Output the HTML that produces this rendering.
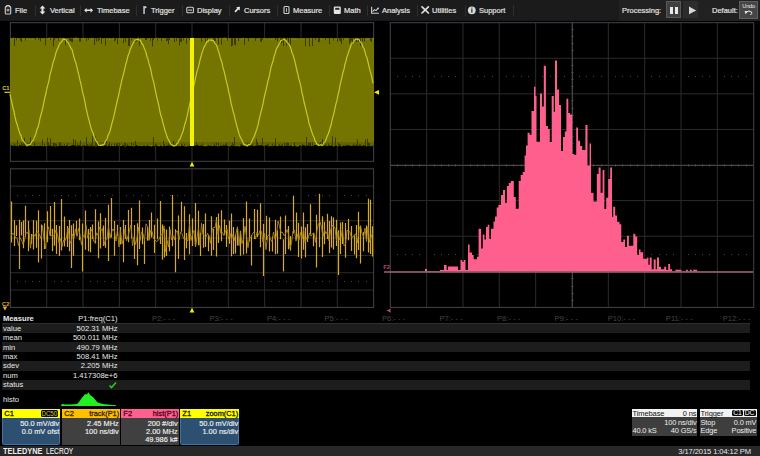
<!DOCTYPE html>
<html><head><meta charset="utf-8"><style>
*{margin:0;padding:0;box-sizing:border-box}
html,body{width:760px;height:456px;overflow:hidden;background:#000;font-family:"Liberation Sans", sans-serif;}
.abs{position:absolute}
#menu{position:absolute;left:0;top:0;width:760px;height:21px;background:#1b1b1b;border-bottom:1px solid #0d1822}
.mt{position:absolute;top:5px;font-size:7.5px;line-height:12px;color:#e0e0e0;font-weight:normal;letter-spacing:0px;-webkit-text-stroke:0.2px #e0e0e0}
.sep{position:absolute;top:5px;width:1px;height:11px;background:#2e2e2e}
.ic{position:absolute}
#proc{position:absolute;left:619px;top:0;width:141px;height:21px;background:#212121}
.t{position:absolute;white-space:nowrap;line-height:1}
.row{position:absolute;left:2px;width:748px;height:9.5px;background:#1d1d1d}
.m{position:absolute;font-size:7.6px;color:#e8e8e8;white-space:nowrap;line-height:9px}
.pl{position:absolute;top:314px;font-size:7.6px;color:#444;white-space:nowrap;line-height:9px;text-align:right;width:57px}
.box{position:absolute;top:409px;height:36px}
.bh{position:absolute;left:0;top:0;right:0;height:9px;font-size:7.8px;line-height:9.4px;padding:0 1px 0 2px}
.bb{position:absolute;left:0;top:9px;right:0;bottom:0;font-size:7.8px;line-height:8.6px;color:#f0f0f0;text-align:right;padding:1px 1px 0 0}
</style></head><body>
<div id="menu"></div>
<div id="proc"></div>
<div class="mt" style="left:15px">File</div><div class="mt" style="left:50px">Vertical</div><div class="mt" style="left:97px">Timebase</div><div class="mt" style="left:151px">Trigger</div><div class="mt" style="left:197px">Display</div><div class="mt" style="left:244px">Cursors</div><div class="mt" style="left:293px">Measure</div><div class="mt" style="left:344px">Math</div><div class="mt" style="left:382px">Analysis</div><div class="mt" style="left:432px">Utilities</div><div class="mt" style="left:479px">Support</div><div class="sep" style="left:35px"></div><div class="sep" style="left:80px"></div><div class="sep" style="left:136px"></div><div class="sep" style="left:182px"></div><div class="sep" style="left:229px"></div><div class="sep" style="left:277px"></div><div class="sep" style="left:329px"></div><div class="sep" style="left:367px"></div><div class="sep" style="left:417px"></div><div class="sep" style="left:464.5px"></div><div class="sep" style="left:512.5px"></div>

<svg class="ic" style="left:0;top:0" width="520" height="20">
 <g fill="none" stroke="#cfcfcf" stroke-width="1.1">
  <path d="M5.3,7.4 Q5.3,6.6 6.2,6.6 L6.8,6.6 L6.8,5.6 L9.2,5.6 L9.2,6.6 L9.8,6.6 Q10.7,6.6 10.7,7.4 L10.7,13.2 Q10.7,14 9.8,14 L6.2,14 Q5.3,14 5.3,13.2 Z"/>
  <rect x="186.8" y="7.3" width="6.6" height="5.5" rx="1"/>
  <line x1="188.2" y1="10.1" x2="192" y2="10.1"/>
  <rect x="284" y="6.5" width="5" height="7" rx="1"/>
  <polyline points="371.6,6.8 371.6,13.2 378.8,13.2"/>
  <polyline points="372.6,11.6 374.4,9.6 376,10.6 378,8.4"/>
 </g>
 <rect x="6.6" y="8.8" width="2.8" height="2.6" fill="#9a9a9a"/>
 <g fill="#e4e4e4">
  <polygon points="39.6,8.6 42.5,5.5 45.4,8.6 43.5,8.6 43.5,11.4 45.4,11.4 42.5,14.4 39.6,11.4 41.5,11.4 41.5,8.6"/>
  <polygon points="84.2,10.3 86.6,7.9 86.6,9.5 90.6,9.5 90.6,7.9 93,10.3 90.6,12.7 90.6,11.1 86.6,11.1 86.6,12.7"/>
  <rect x="143.4" y="6" width="1.3" height="8"/>
  <polygon points="144.7,6 147,6.9 144.7,8.8"/>
  <polygon points="240,6.8 239.6,10.6 238.4,9.4 235.6,12.4 234.4,11.2 237.2,8.2 236.2,7.2"/>
  <rect x="333.8" y="6.6" width="7" height="7.4" rx="1.2"/>
  <polygon points="376.8,8 379,7.4 378.4,9.6"/>
 </g>
 <rect x="335.2" y="7.8" width="4.2" height="2" fill="#2a2a2a"/>
 <rect x="286.1" y="8.2" width="0.9" height="3.6" fill="#cfcfcf"/>
 <g stroke="#e0e0e0" stroke-width="1.7" stroke-linecap="round">
  <line x1="422" y1="6.8" x2="428.4" y2="13"/><line x1="428.4" y1="6.8" x2="422" y2="13"/>
 </g>
 <circle cx="471.8" cy="10.3" r="3.9" fill="#d8d8d8"/>
 <rect x="471.2" y="9.2" width="1.3" height="3.4" fill="#333"/><rect x="471.2" y="7.6" width="1.3" height="1" fill="#333"/>
</svg>
<div class="t" style="left:622px;top:6.6px;font-size:7.5px;color:#e0e0e0;-webkit-text-stroke:0.2px #e0e0e0">Processing:</div>
<div class="abs" style="left:665.5px;top:1px;width:15.5px;height:17px;background:#404040;border:1px solid #585858"></div>
<div class="abs" style="left:670px;top:6.6px;width:2.6px;height:7.2px;background:#e8e8e8"></div>
<div class="abs" style="left:675.2px;top:6.6px;width:2.6px;height:7.2px;background:#e8e8e8"></div>
<div class="abs" style="left:683px;top:1px;width:15px;height:17px;background:#2c2c2c"></div>
<svg class="abs" style="left:683px;top:1px" width="15" height="17"><polygon points="6,5.6 13.2,9.4 6,13.2" fill="#d8d8d8"/></svg>
<div class="t" style="left:712px;top:7.4px;font-size:7.5px;color:#e0e0e0;-webkit-text-stroke:0.2px #e0e0e0">Default:</div>
<div class="abs" style="left:739.3px;top:1.3px;width:18.7px;height:17.7px;background:#464646;border:1px solid #5e5e5e"></div>
<div class="t" style="left:739.3px;width:18.7px;text-align:center;top:4.2px;font-size:5.6px;color:#eee;letter-spacing:-0.2px">Undo</div>
<svg class="abs" style="left:739px;top:1px" width="19" height="18"><path d="M7.2,11.2 Q10,8.8 12.5,11 Q13.5,12.5 11.5,14" fill="none" stroke="#eee" stroke-width="1"/><polygon points="5.6,10 8.8,10.2 6.6,13.2" fill="#eee"/></svg>

<svg class="abs" style="left:0;top:0" width="760" height="456">
<rect x="10" y="22" width="364" height="140" fill="#000"/>
<line x1="46.72" y1="22.7" x2="46.72" y2="161.3" stroke="#2c2c2c" stroke-width="1" />
<line x1="83.04" y1="22.7" x2="83.04" y2="161.3" stroke="#2c2c2c" stroke-width="1" />
<line x1="119.36" y1="22.7" x2="119.36" y2="161.3" stroke="#2c2c2c" stroke-width="1" />
<line x1="155.68" y1="22.7" x2="155.68" y2="161.3" stroke="#2c2c2c" stroke-width="1" />
<line x1="192.00" y1="22.7" x2="192.00" y2="161.3" stroke="#2c2c2c" stroke-width="1" />
<line x1="228.32" y1="22.7" x2="228.32" y2="161.3" stroke="#2c2c2c" stroke-width="1" />
<line x1="264.64" y1="22.7" x2="264.64" y2="161.3" stroke="#2c2c2c" stroke-width="1" />
<line x1="300.96" y1="22.7" x2="300.96" y2="161.3" stroke="#2c2c2c" stroke-width="1" />
<line x1="337.28" y1="22.7" x2="337.28" y2="161.3" stroke="#2c2c2c" stroke-width="1" />
<line x1="10.4" y1="40.03" x2="373.6" y2="40.03" stroke="#2c2c2c" stroke-width="1" />
<line x1="10.4" y1="57.35" x2="373.6" y2="57.35" stroke="#2c2c2c" stroke-width="1" />
<line x1="10.4" y1="74.68" x2="373.6" y2="74.68" stroke="#2c2c2c" stroke-width="1" />
<line x1="10.4" y1="92.00" x2="373.6" y2="92.00" stroke="#2c2c2c" stroke-width="1" />
<line x1="10.4" y1="109.33" x2="373.6" y2="109.33" stroke="#2c2c2c" stroke-width="1" />
<line x1="10.4" y1="126.65" x2="373.6" y2="126.65" stroke="#2c2c2c" stroke-width="1" />
<line x1="10.4" y1="143.98" x2="373.6" y2="143.98" stroke="#2c2c2c" stroke-width="1" />
<rect x="10.4" y="22.7" width="363.20" height="138.60" fill="none" stroke="#444444"/>
<polygon points="10,38.1 11,38.5 12,38.4 13,37.7 14,37.7 15,37.7 16,38.2 17,37.8 18,38.5 19,38.4 20,39.0 21,38.8 22,37.8 23,38.0 24,37.9 25,38.5 26,38.4 27,37.7 28,38.6 29,38.0 30,38.2 31,38.7 32,37.9 33,38.3 34,38.6 35,39.0 36,38.2 37,37.8 38,37.7 39,38.7 40,38.8 41,38.6 42,38.4 43,38.8 44,38.3 45,37.7 46,38.5 47,38.8 48,38.1 49,37.6 50,37.8 51,37.7 52,37.8 53,38.1 54,37.7 55,38.4 56,38.7 57,38.0 58,38.1 59,38.9 60,37.8 61,37.9 62,38.4 63,37.6 64,38.1 65,38.9 66,38.3 67,38.5 68,38.9 69,38.8 70,38.1 71,37.7 72,37.7 73,37.9 74,38.1 75,37.6 76,37.7 77,37.6 78,38.5 79,38.0 80,38.1 81,38.8 82,38.3 83,37.7 84,38.1 85,38.8 86,37.6 87,38.3 88,38.4 89,38.3 90,38.8 91,38.0 92,37.8 93,38.3 94,38.1 95,38.7 96,38.8 97,38.7 98,37.9 99,38.1 100,37.6 101,38.0 102,38.9 103,38.9 104,38.9 105,37.9 106,37.9 107,38.5 108,38.8 109,38.5 110,37.7 111,38.9 112,38.7 113,37.8 114,38.1 115,39.0 116,38.2 117,38.6 118,37.8 119,38.9 120,37.8 121,39.0 122,38.1 123,37.8 124,39.0 125,38.3 126,38.2 127,38.8 128,38.0 129,37.9 130,38.0 131,37.8 132,38.1 133,38.4 134,38.2 135,38.3 136,38.3 137,38.2 138,37.6 139,37.8 140,38.6 141,38.1 142,38.4 143,37.7 144,37.9 145,38.7 146,38.4 147,38.9 148,38.5 149,38.3 150,38.2 151,38.3 152,38.6 153,38.9 154,38.4 155,38.8 156,37.8 157,37.7 158,37.7 159,38.7 160,37.8 161,38.5 162,38.8 163,37.9 164,38.2 165,39.0 166,37.8 167,38.3 168,37.9 169,38.6 170,38.4 171,37.6 172,38.5 173,37.7 174,38.7 175,37.7 176,37.7 177,38.0 178,38.2 179,38.7 180,37.8 181,38.4 182,37.7 183,38.6 184,37.7 185,38.5 186,37.7 187,37.7 188,38.2 189,38.4 190,38.0 191,38.3 192,37.8 193,37.7 194,38.0 195,38.7 196,38.3 197,38.1 198,38.0 199,38.6 200,37.9 201,38.9 202,38.7 203,38.3 204,38.2 205,38.6 206,38.1 207,38.6 208,38.2 209,37.7 210,37.7 211,38.0 212,37.7 213,38.8 214,38.0 215,38.0 216,37.8 217,38.0 218,39.0 219,37.9 220,38.0 221,37.6 222,38.3 223,37.9 224,37.6 225,37.7 226,37.7 227,38.0 228,38.4 229,38.7 230,38.6 231,38.1 232,39.0 233,38.6 234,37.7 235,38.8 236,38.6 237,37.8 238,38.3 239,38.7 240,38.4 241,38.6 242,37.9 243,37.8 244,37.7 245,38.4 246,38.5 247,38.3 248,38.7 249,38.3 250,38.5 251,38.6 252,37.7 253,38.6 254,38.6 255,38.3 256,38.3 257,38.7 258,38.5 259,37.8 260,38.6 261,38.4 262,37.7 263,38.5 264,38.5 265,38.3 266,38.3 267,38.9 268,39.0 269,37.6 270,38.7 271,38.2 272,37.9 273,37.9 274,37.8 275,38.9 276,38.7 277,38.8 278,37.9 279,38.3 280,37.6 281,38.2 282,37.8 283,38.0 284,37.6 285,38.8 286,38.9 287,38.9 288,38.1 289,39.0 290,38.1 291,38.0 292,37.7 293,38.0 294,37.9 295,38.3 296,38.1 297,38.8 298,38.5 299,38.9 300,38.6 301,38.6 302,38.7 303,38.0 304,38.9 305,38.3 306,38.0 307,39.0 308,38.5 309,38.4 310,37.8 311,37.9 312,38.3 313,38.9 314,38.2 315,37.9 316,38.1 317,37.9 318,38.4 319,38.6 320,38.2 321,38.1 322,37.7 323,39.0 324,38.3 325,38.8 326,38.0 327,38.2 328,38.9 329,38.8 330,37.6 331,38.9 332,38.4 333,38.1 334,38.8 335,39.0 336,37.8 337,38.3 338,38.9 339,38.5 340,38.2 341,37.7 342,37.9 343,38.5 344,37.8 345,38.5 346,37.8 347,38.3 348,38.1 349,38.4 350,38.0 351,38.9 352,38.8 353,37.9 354,38.9 355,38.0 356,38.3 357,38.2 358,38.5 359,37.9 360,38.1 361,38.6 362,38.7 363,38.3 364,39.0 365,38.7 366,37.9 367,38.0 368,38.3 369,37.9 370,38.5 371,37.8 372,37.9 373,37.8 374,37.7 374,145.6 373,145.1 372,146.6 371,145.6 370,146.5 369,145.7 368,145.3 367,146.5 366,146.2 365,145.4 364,145.5 363,145.3 362,146.2 361,145.3 360,145.7 359,145.1 358,146.5 357,145.4 356,146.1 355,145.0 354,146.1 353,145.4 352,145.8 351,146.0 350,145.7 349,145.0 348,145.4 347,145.9 346,145.1 345,146.1 344,145.4 343,145.5 342,146.5 341,146.3 340,145.9 339,146.2 338,146.2 337,146.1 336,145.2 335,145.4 334,146.4 333,146.5 332,145.0 331,145.8 330,146.1 329,145.0 328,146.4 327,145.7 326,145.4 325,145.3 324,146.0 323,145.2 322,145.4 321,145.5 320,145.8 319,145.7 318,146.4 317,145.4 316,145.1 315,145.1 314,145.2 313,146.6 312,145.4 311,146.4 310,145.3 309,145.6 308,145.5 307,145.4 306,146.2 305,145.5 304,145.2 303,145.1 302,146.0 301,145.7 300,145.1 299,145.9 298,146.5 297,146.3 296,146.5 295,145.3 294,145.4 293,146.5 292,146.3 291,145.1 290,145.7 289,145.9 288,145.6 287,145.5 286,146.1 285,145.2 284,146.2 283,146.3 282,145.6 281,145.5 280,145.8 279,145.0 278,146.4 277,146.1 276,145.8 275,145.2 274,145.8 273,145.9 272,146.5 271,145.4 270,146.5 269,145.7 268,146.5 267,145.3 266,145.2 265,145.7 264,145.5 263,146.1 262,145.4 261,145.0 260,145.5 259,145.4 258,145.1 257,146.0 256,146.1 255,145.6 254,146.6 253,145.3 252,145.4 251,145.4 250,145.1 249,145.9 248,146.2 247,145.0 246,146.1 245,146.0 244,146.3 243,145.6 242,145.0 241,146.1 240,146.4 239,146.3 238,146.3 237,145.8 236,146.3 235,146.0 234,146.3 233,146.0 232,145.2 231,145.5 230,146.4 229,146.1 228,145.8 227,145.4 226,145.0 225,145.6 224,145.4 223,145.8 222,145.8 221,145.6 220,145.6 219,146.5 218,145.9 217,146.5 216,145.7 215,145.7 214,145.4 213,146.1 212,146.3 211,145.3 210,146.2 209,145.2 208,145.6 207,146.0 206,146.3 205,146.6 204,145.8 203,146.3 202,145.7 201,145.2 200,145.8 199,145.9 198,145.0 197,145.0 196,145.3 195,145.5 194,145.5 193,145.3 192,145.3 191,145.4 190,145.2 189,146.5 188,145.5 187,146.4 186,146.4 185,146.3 184,146.5 183,145.7 182,145.1 181,146.1 180,146.5 179,145.4 178,146.5 177,145.2 176,146.2 175,145.4 174,146.6 173,146.6 172,145.8 171,145.5 170,145.7 169,145.0 168,145.5 167,145.5 166,145.7 165,146.3 164,145.8 163,146.5 162,146.5 161,145.2 160,146.1 159,146.4 158,146.1 157,145.4 156,145.7 155,145.2 154,146.5 153,145.4 152,146.4 151,146.5 150,145.9 149,146.1 148,145.8 147,145.7 146,146.2 145,145.8 144,145.4 143,145.9 142,146.3 141,145.8 140,145.9 139,145.8 138,146.3 137,145.3 136,145.0 135,145.9 134,146.5 133,146.4 132,145.7 131,146.5 130,145.7 129,145.9 128,145.5 127,145.3 126,146.4 125,146.5 124,146.0 123,145.0 122,145.9 121,146.1 120,146.3 119,146.3 118,145.2 117,145.3 116,146.5 115,145.6 114,146.3 113,146.3 112,145.8 111,146.3 110,146.1 109,146.3 108,145.8 107,146.4 106,145.3 105,145.4 104,145.6 103,146.6 102,145.7 101,146.1 100,145.4 99,145.0 98,145.8 97,146.2 96,146.3 95,146.6 94,145.4 93,146.2 92,146.2 91,145.6 90,146.1 89,146.6 88,145.0 87,145.2 86,146.5 85,145.3 84,145.4 83,145.2 82,145.8 81,146.6 80,145.2 79,145.6 78,145.2 77,146.4 76,145.6 75,145.2 74,145.1 73,145.3 72,145.1 71,146.0 70,145.6 69,146.3 68,146.2 67,145.1 66,146.0 65,146.1 64,145.9 63,145.7 62,145.4 61,145.8 60,145.4 59,145.2 58,146.4 57,145.7 56,146.4 55,146.4 54,145.7 53,146.4 52,145.4 51,146.2 50,145.2 49,145.7 48,146.1 47,145.5 46,146.6 45,146.1 44,146.1 43,146.5 42,145.7 41,146.0 40,145.5 39,145.9 38,146.1 37,145.8 36,146.2 35,145.2 34,145.5 33,146.4 32,145.9 31,146.1 30,145.5 29,145.9 28,145.7 27,145.3 26,145.1 25,145.6 24,145.9 23,146.3 22,145.2 21,145.5 20,145.1 19,145.6 18,146.5 17,145.4 16,146.3 15,145.1 14,145.7 13,145.8 12,145.6 11,145.1 10,145.2" fill="#747400"/>
<rect x="10" y="38" width="364" height="2" fill="#7f7f08" opacity="0.7"/>
<rect x="10" y="142" width="364" height="3" fill="#5c5c00" opacity="0.6"/>
<line x1="14.5" y1="38.3" x2="14.5" y2="45.912079546873684" stroke="#343400" stroke-width="0.9" />
<line x1="14.5" y1="146" x2="14.5" y2="143.55345145912605" stroke="#383800" stroke-width="0.9" />
<line x1="16.5" y1="38.3" x2="16.5" y2="40.49951607064833" stroke="#343400" stroke-width="0.9" />
<line x1="17.5" y1="146" x2="17.5" y2="139.96298783346526" stroke="#383800" stroke-width="0.9" />
<line x1="20.5" y1="38.3" x2="20.5" y2="40.73178597356247" stroke="#343400" stroke-width="0.9" />
<line x1="21.5" y1="38.3" x2="21.5" y2="42.04248341237258" stroke="#343400" stroke-width="0.9" />
<line x1="21.5" y1="146" x2="21.5" y2="142.4704386810696" stroke="#383800" stroke-width="0.9" />
<line x1="22.5" y1="146" x2="22.5" y2="144.3435501418386" stroke="#383800" stroke-width="0.9" />
<line x1="23.5" y1="146" x2="23.5" y2="142.25362052758007" stroke="#383800" stroke-width="0.9" />
<line x1="24.5" y1="146" x2="24.5" y2="137.91510759131666" stroke="#383800" stroke-width="0.9" />
<line x1="25.5" y1="38.3" x2="25.5" y2="40.59120907791383" stroke="#343400" stroke-width="0.9" />
<line x1="25.5" y1="146" x2="25.5" y2="142.61086906873493" stroke="#383800" stroke-width="0.9" />
<line x1="27.5" y1="146" x2="27.5" y2="143.31202735536598" stroke="#383800" stroke-width="0.9" />
<line x1="29.5" y1="146" x2="29.5" y2="143.266315390678" stroke="#383800" stroke-width="0.9" />
<line x1="30.5" y1="146" x2="30.5" y2="137.3075599333899" stroke="#383800" stroke-width="0.9" />
<line x1="34.5" y1="146" x2="34.5" y2="142.61778582334634" stroke="#383800" stroke-width="0.9" />
<line x1="35.5" y1="38.3" x2="35.5" y2="39.88465929854083" stroke="#343400" stroke-width="0.9" />
<line x1="38.5" y1="38.3" x2="38.5" y2="40.041056446378306" stroke="#343400" stroke-width="0.9" />
<line x1="40.5" y1="38.3" x2="40.5" y2="41.3507691147041" stroke="#343400" stroke-width="0.9" />
<line x1="42.5" y1="146" x2="42.5" y2="139.53108926566702" stroke="#383800" stroke-width="0.9" />
<line x1="44.5" y1="146" x2="44.5" y2="143.88664925777346" stroke="#383800" stroke-width="0.9" />
<line x1="45.5" y1="38.3" x2="45.5" y2="45.32398264526483" stroke="#343400" stroke-width="0.9" />
<line x1="47.5" y1="146" x2="47.5" y2="137.73336723953798" stroke="#383800" stroke-width="0.9" />
<line x1="48.5" y1="146" x2="48.5" y2="142.45224323438268" stroke="#383800" stroke-width="0.9" />
<line x1="50.5" y1="38.3" x2="50.5" y2="40.098041571870276" stroke="#343400" stroke-width="0.9" />
<line x1="50.5" y1="146" x2="50.5" y2="138.0840311723142" stroke="#383800" stroke-width="0.9" />
<line x1="53.5" y1="38.3" x2="53.5" y2="46.609957292096226" stroke="#343400" stroke-width="0.9" />
<line x1="53.5" y1="146" x2="53.5" y2="142.95013005007618" stroke="#383800" stroke-width="0.9" />
<line x1="54.5" y1="38.3" x2="54.5" y2="40.15342371173513" stroke="#343400" stroke-width="0.9" />
<line x1="54.5" y1="146" x2="54.5" y2="143.00144157684915" stroke="#383800" stroke-width="0.9" />
<line x1="55.5" y1="146" x2="55.5" y2="143.68187691999609" stroke="#383800" stroke-width="0.9" />
<line x1="56.5" y1="146" x2="56.5" y2="143.9914805697004" stroke="#383800" stroke-width="0.9" />
<line x1="58.5" y1="38.3" x2="58.5" y2="40.78824178174187" stroke="#343400" stroke-width="0.9" />
<line x1="59.5" y1="146" x2="59.5" y2="142.76148528100612" stroke="#383800" stroke-width="0.9" />
<line x1="60.5" y1="146" x2="60.5" y2="142.11702790760694" stroke="#383800" stroke-width="0.9" />
<line x1="64.5" y1="146" x2="64.5" y2="143.99083207283192" stroke="#383800" stroke-width="0.9" />
<line x1="65.5" y1="38.3" x2="65.5" y2="44.783141816387975" stroke="#343400" stroke-width="0.9" />
<line x1="67.5" y1="146" x2="67.5" y2="143.12113035949884" stroke="#383800" stroke-width="0.9" />
<line x1="69.5" y1="38.3" x2="69.5" y2="40.72710906150283" stroke="#343400" stroke-width="0.9" />
<line x1="70.5" y1="38.3" x2="70.5" y2="41.10289718828695" stroke="#343400" stroke-width="0.9" />
<line x1="71.5" y1="38.3" x2="71.5" y2="41.8120340360728" stroke="#343400" stroke-width="0.9" />
<line x1="72.5" y1="38.3" x2="72.5" y2="42.157689273422534" stroke="#343400" stroke-width="0.9" />
<line x1="73.5" y1="146" x2="73.5" y2="139.0605240879098" stroke="#383800" stroke-width="0.9" />
<line x1="75.5" y1="146" x2="75.5" y2="139.88962456505547" stroke="#383800" stroke-width="0.9" />
<line x1="77.5" y1="146" x2="77.5" y2="143.500636042309" stroke="#383800" stroke-width="0.9" />
<line x1="79.5" y1="38.3" x2="79.5" y2="41.61220672681275" stroke="#343400" stroke-width="0.9" />
<line x1="80.5" y1="38.3" x2="80.5" y2="41.69365313709254" stroke="#343400" stroke-width="0.9" />
<line x1="80.5" y1="146" x2="80.5" y2="140.41134492345765" stroke="#383800" stroke-width="0.9" />
<line x1="86.5" y1="38.3" x2="86.5" y2="41.023753997409216" stroke="#343400" stroke-width="0.9" />
<line x1="86.5" y1="146" x2="86.5" y2="137.10012554306647" stroke="#383800" stroke-width="0.9" />
<line x1="87.5" y1="146" x2="87.5" y2="144.2323098207429" stroke="#383800" stroke-width="0.9" />
<line x1="88.5" y1="38.3" x2="88.5" y2="40.02928285975534" stroke="#343400" stroke-width="0.9" />
<line x1="89.5" y1="146" x2="89.5" y2="144.2943974300823" stroke="#383800" stroke-width="0.9" />
<line x1="91.5" y1="146" x2="91.5" y2="143.55534342578156" stroke="#383800" stroke-width="0.9" />
<line x1="92.5" y1="146" x2="92.5" y2="136.01937908626633" stroke="#383800" stroke-width="0.9" />
<line x1="94.5" y1="38.3" x2="94.5" y2="45.02154488047648" stroke="#343400" stroke-width="0.9" />
<line x1="95.5" y1="146" x2="95.5" y2="136.34708260666108" stroke="#383800" stroke-width="0.9" />
<line x1="96.5" y1="38.3" x2="96.5" y2="41.69044941686505" stroke="#343400" stroke-width="0.9" />
<line x1="96.5" y1="146" x2="96.5" y2="139.62503704037286" stroke="#383800" stroke-width="0.9" />
<line x1="97.5" y1="146" x2="97.5" y2="142.20023047029773" stroke="#383800" stroke-width="0.9" />
<line x1="98.5" y1="38.3" x2="98.5" y2="41.065017431925966" stroke="#343400" stroke-width="0.9" />
<line x1="99.5" y1="38.3" x2="99.5" y2="40.20307336741261" stroke="#343400" stroke-width="0.9" />
<line x1="101.5" y1="38.3" x2="101.5" y2="43.702775452948586" stroke="#343400" stroke-width="0.9" />
<line x1="105.5" y1="38.3" x2="105.5" y2="45.50421675591244" stroke="#343400" stroke-width="0.9" />
<line x1="106.5" y1="146" x2="106.5" y2="138.11319744042325" stroke="#383800" stroke-width="0.9" />
<line x1="108.5" y1="146" x2="108.5" y2="144.37927136390687" stroke="#383800" stroke-width="0.9" />
<line x1="109.5" y1="146" x2="109.5" y2="142.0398620055933" stroke="#383800" stroke-width="0.9" />
<line x1="111.5" y1="146" x2="111.5" y2="144.1265881081862" stroke="#383800" stroke-width="0.9" />
<line x1="114.5" y1="38.3" x2="114.5" y2="41.43277106444507" stroke="#343400" stroke-width="0.9" />
<line x1="114.5" y1="146" x2="114.5" y2="143.61259356320392" stroke="#383800" stroke-width="0.9" />
<line x1="115.5" y1="38.3" x2="115.5" y2="40.36064740593058" stroke="#343400" stroke-width="0.9" />
<line x1="116.5" y1="146" x2="116.5" y2="143.31274547132435" stroke="#383800" stroke-width="0.9" />
<line x1="117.5" y1="38.3" x2="117.5" y2="44.152558933020785" stroke="#343400" stroke-width="0.9" />
<line x1="117.5" y1="146" x2="117.5" y2="142.90447475864195" stroke="#383800" stroke-width="0.9" />
<line x1="119.5" y1="146" x2="119.5" y2="142.88763159102052" stroke="#383800" stroke-width="0.9" />
<line x1="123.5" y1="38.3" x2="123.5" y2="43.45400693726055" stroke="#343400" stroke-width="0.9" />
<line x1="124.5" y1="146" x2="124.5" y2="142.5528194065221" stroke="#383800" stroke-width="0.9" />
<line x1="125.5" y1="38.3" x2="125.5" y2="42.15230151931304" stroke="#343400" stroke-width="0.9" />
<line x1="125.5" y1="146" x2="125.5" y2="142.97979257548798" stroke="#383800" stroke-width="0.9" />
<line x1="127.5" y1="146" x2="127.5" y2="143.74933458443797" stroke="#383800" stroke-width="0.9" />
<line x1="128.5" y1="38.3" x2="128.5" y2="46.0404096288438" stroke="#343400" stroke-width="0.9" />
<line x1="129.5" y1="38.3" x2="129.5" y2="45.908156060374594" stroke="#343400" stroke-width="0.9" />
<line x1="131.5" y1="38.3" x2="131.5" y2="40.380741719231374" stroke="#343400" stroke-width="0.9" />
<line x1="131.5" y1="146" x2="131.5" y2="142.6258648461629" stroke="#383800" stroke-width="0.9" />
<line x1="133.5" y1="146" x2="133.5" y2="143.40986819405606" stroke="#383800" stroke-width="0.9" />
<line x1="135.5" y1="38.3" x2="135.5" y2="42.21285202827636" stroke="#343400" stroke-width="0.9" />
<line x1="135.5" y1="146" x2="135.5" y2="140.92386146747435" stroke="#383800" stroke-width="0.9" />
<line x1="136.5" y1="38.3" x2="136.5" y2="41.65969666024253" stroke="#343400" stroke-width="0.9" />
<line x1="139.5" y1="38.3" x2="139.5" y2="45.50743614976013" stroke="#343400" stroke-width="0.9" />
<line x1="145.5" y1="38.3" x2="145.5" y2="39.99450587341943" stroke="#343400" stroke-width="0.9" />
<line x1="146.5" y1="38.3" x2="146.5" y2="40.06669594686421" stroke="#343400" stroke-width="0.9" />
<line x1="147.5" y1="146" x2="147.5" y2="144.39587640132007" stroke="#383800" stroke-width="0.9" />
<line x1="150.5" y1="38.3" x2="150.5" y2="40.708515289413036" stroke="#343400" stroke-width="0.9" />
<line x1="152.5" y1="38.3" x2="152.5" y2="46.500430724690574" stroke="#343400" stroke-width="0.9" />
<line x1="153.5" y1="38.3" x2="153.5" y2="40.07992431137451" stroke="#343400" stroke-width="0.9" />
<line x1="153.5" y1="146" x2="153.5" y2="136.93990490757838" stroke="#383800" stroke-width="0.9" />
<line x1="155.5" y1="146" x2="155.5" y2="144.25534545645178" stroke="#383800" stroke-width="0.9" />
<line x1="156.5" y1="146" x2="156.5" y2="143.44058653598353" stroke="#383800" stroke-width="0.9" />
<line x1="157.5" y1="38.3" x2="157.5" y2="40.50648305208251" stroke="#343400" stroke-width="0.9" />
<line x1="161.5" y1="38.3" x2="161.5" y2="40.891123959396445" stroke="#343400" stroke-width="0.9" />
<line x1="163.5" y1="146" x2="163.5" y2="140.54555229937506" stroke="#383800" stroke-width="0.9" />
<line x1="164.5" y1="146" x2="164.5" y2="143.9949120788214" stroke="#383800" stroke-width="0.9" />
<line x1="166.5" y1="38.3" x2="166.5" y2="41.028710239663866" stroke="#343400" stroke-width="0.9" />
<line x1="167.5" y1="38.3" x2="167.5" y2="40.66796419615311" stroke="#343400" stroke-width="0.9" />
<line x1="168.5" y1="38.3" x2="168.5" y2="44.29305413554119" stroke="#343400" stroke-width="0.9" />
<line x1="168.5" y1="146" x2="168.5" y2="143.25421099055947" stroke="#383800" stroke-width="0.9" />
<line x1="169.5" y1="38.3" x2="169.5" y2="40.00220649410582" stroke="#343400" stroke-width="0.9" />
<line x1="173.5" y1="146" x2="173.5" y2="140.87412984028646" stroke="#383800" stroke-width="0.9" />
<line x1="174.5" y1="38.3" x2="174.5" y2="42.053039210009146" stroke="#343400" stroke-width="0.9" />
<line x1="176.5" y1="38.3" x2="176.5" y2="41.12886146370486" stroke="#343400" stroke-width="0.9" />
<line x1="179.5" y1="38.3" x2="179.5" y2="45.61735062180516" stroke="#343400" stroke-width="0.9" />
<line x1="180.5" y1="38.3" x2="180.5" y2="41.733587961964545" stroke="#343400" stroke-width="0.9" />
<line x1="181.5" y1="38.3" x2="181.5" y2="42.01281380758739" stroke="#343400" stroke-width="0.9" />
<line x1="181.5" y1="146" x2="181.5" y2="143.74623076329502" stroke="#383800" stroke-width="0.9" />
<line x1="183.5" y1="38.3" x2="183.5" y2="40.41895258209034" stroke="#343400" stroke-width="0.9" />
<line x1="184.5" y1="146" x2="184.5" y2="144.026816471318" stroke="#383800" stroke-width="0.9" />
<line x1="186.5" y1="38.3" x2="186.5" y2="43.655732967585415" stroke="#343400" stroke-width="0.9" />
<line x1="189.5" y1="38.3" x2="189.5" y2="40.06717428641029" stroke="#343400" stroke-width="0.9" />
<line x1="189.5" y1="146" x2="189.5" y2="144.41517098597032" stroke="#383800" stroke-width="0.9" />
<line x1="193.5" y1="38.3" x2="193.5" y2="40.81178342486764" stroke="#343400" stroke-width="0.9" />
<line x1="196.5" y1="146" x2="196.5" y2="142.2998068951516" stroke="#383800" stroke-width="0.9" />
<line x1="201.5" y1="38.3" x2="201.5" y2="41.75594512671478" stroke="#343400" stroke-width="0.9" />
<line x1="202.5" y1="146" x2="202.5" y2="143.36201381646734" stroke="#383800" stroke-width="0.9" />
<line x1="205.5" y1="38.3" x2="205.5" y2="41.74544855525031" stroke="#343400" stroke-width="0.9" />
<line x1="207.5" y1="38.3" x2="207.5" y2="40.20210652567848" stroke="#343400" stroke-width="0.9" />
<line x1="209.5" y1="38.3" x2="209.5" y2="41.15258829602938" stroke="#343400" stroke-width="0.9" />
<line x1="213.5" y1="38.3" x2="213.5" y2="40.78123253348827" stroke="#343400" stroke-width="0.9" />
<line x1="214.5" y1="38.3" x2="214.5" y2="44.54415550553419" stroke="#343400" stroke-width="0.9" />
<line x1="214.5" y1="146" x2="214.5" y2="143.500789559232" stroke="#383800" stroke-width="0.9" />
<line x1="215.5" y1="38.3" x2="215.5" y2="40.8513676633791" stroke="#343400" stroke-width="0.9" />
<line x1="216.5" y1="146" x2="216.5" y2="142.6463234424502" stroke="#383800" stroke-width="0.9" />
<line x1="218.5" y1="38.3" x2="218.5" y2="44.671869643162246" stroke="#343400" stroke-width="0.9" />
<line x1="218.5" y1="146" x2="218.5" y2="142.55848123377385" stroke="#383800" stroke-width="0.9" />
<line x1="221.5" y1="38.3" x2="221.5" y2="44.53596100755879" stroke="#343400" stroke-width="0.9" />
<line x1="223.5" y1="146" x2="223.5" y2="144.18708480187047" stroke="#383800" stroke-width="0.9" />
<line x1="225.5" y1="146" x2="225.5" y2="143.86612710388582" stroke="#383800" stroke-width="0.9" />
<line x1="226.5" y1="146" x2="226.5" y2="142.6955264732444" stroke="#383800" stroke-width="0.9" />
<line x1="227.5" y1="38.3" x2="227.5" y2="40.55455068275929" stroke="#343400" stroke-width="0.9" />
<line x1="231.5" y1="38.3" x2="231.5" y2="46.47032081735472" stroke="#343400" stroke-width="0.9" />
<line x1="232.5" y1="38.3" x2="232.5" y2="45.516068133999354" stroke="#343400" stroke-width="0.9" />
<line x1="232.5" y1="146" x2="232.5" y2="142.12057855591178" stroke="#383800" stroke-width="0.9" />
<line x1="233.5" y1="146" x2="233.5" y2="144.14316861975615" stroke="#383800" stroke-width="0.9" />
<line x1="234.5" y1="38.3" x2="234.5" y2="44.51255426665468" stroke="#343400" stroke-width="0.9" />
<line x1="234.5" y1="146" x2="234.5" y2="137.04162825142885" stroke="#383800" stroke-width="0.9" />
<line x1="235.5" y1="38.3" x2="235.5" y2="45.429285007119994" stroke="#343400" stroke-width="0.9" />
<line x1="238.5" y1="38.3" x2="238.5" y2="41.12698869479103" stroke="#343400" stroke-width="0.9" />
<line x1="240.5" y1="146" x2="240.5" y2="144.15165433523725" stroke="#383800" stroke-width="0.9" />
<line x1="241.5" y1="146" x2="241.5" y2="144.13894790596476" stroke="#383800" stroke-width="0.9" />
<line x1="244.5" y1="38.3" x2="244.5" y2="44.93786142643987" stroke="#343400" stroke-width="0.9" />
<line x1="247.5" y1="146" x2="247.5" y2="142.90968467953576" stroke="#383800" stroke-width="0.9" />
<line x1="248.5" y1="38.3" x2="248.5" y2="41.506470171670266" stroke="#343400" stroke-width="0.9" />
<line x1="251.5" y1="146" x2="251.5" y2="142.93680536138078" stroke="#383800" stroke-width="0.9" />
<line x1="255.5" y1="38.3" x2="255.5" y2="40.85597150049306" stroke="#343400" stroke-width="0.9" />
<line x1="256.5" y1="146" x2="256.5" y2="138.9813514898076" stroke="#383800" stroke-width="0.9" />
<line x1="257.5" y1="146" x2="257.5" y2="142.0625111124752" stroke="#383800" stroke-width="0.9" />
<line x1="260.5" y1="38.3" x2="260.5" y2="41.38705221652195" stroke="#343400" stroke-width="0.9" />
<line x1="261.5" y1="38.3" x2="261.5" y2="42.01400336187387" stroke="#343400" stroke-width="0.9" />
<line x1="262.5" y1="38.3" x2="262.5" y2="39.815526694178516" stroke="#343400" stroke-width="0.9" />
<line x1="262.5" y1="146" x2="262.5" y2="137.95657190807225" stroke="#383800" stroke-width="0.9" />
<line x1="267.5" y1="146" x2="267.5" y2="143.35530167025928" stroke="#383800" stroke-width="0.9" />
<line x1="268.5" y1="146" x2="268.5" y2="144.40755588893646" stroke="#383800" stroke-width="0.9" />
<line x1="272.5" y1="146" x2="272.5" y2="143.44553823332785" stroke="#383800" stroke-width="0.9" />
<line x1="275.5" y1="38.3" x2="275.5" y2="39.89844861598231" stroke="#343400" stroke-width="0.9" />
<line x1="275.5" y1="146" x2="275.5" y2="138.12339335323452" stroke="#383800" stroke-width="0.9" />
<line x1="277.5" y1="38.3" x2="277.5" y2="41.279927059134955" stroke="#343400" stroke-width="0.9" />
<line x1="279.5" y1="146" x2="279.5" y2="143.96930770025082" stroke="#383800" stroke-width="0.9" />
<line x1="280.5" y1="38.3" x2="280.5" y2="39.811958200658246" stroke="#343400" stroke-width="0.9" />
<line x1="281.5" y1="38.3" x2="281.5" y2="43.60848751413716" stroke="#343400" stroke-width="0.9" />
<line x1="282.5" y1="38.3" x2="282.5" y2="41.59837758781369" stroke="#343400" stroke-width="0.9" />
<line x1="282.5" y1="146" x2="282.5" y2="144.03147417078162" stroke="#383800" stroke-width="0.9" />
<line x1="283.5" y1="38.3" x2="283.5" y2="45.79743216806612" stroke="#343400" stroke-width="0.9" />
<line x1="284.5" y1="146" x2="284.5" y2="142.7269121241179" stroke="#383800" stroke-width="0.9" />
<line x1="286.5" y1="38.3" x2="286.5" y2="45.810235373764414" stroke="#343400" stroke-width="0.9" />
<line x1="286.5" y1="146" x2="286.5" y2="142.87325629430563" stroke="#383800" stroke-width="0.9" />
<line x1="287.5" y1="146" x2="287.5" y2="142.67639519274013" stroke="#383800" stroke-width="0.9" />
<line x1="288.5" y1="38.3" x2="288.5" y2="45.00214965292304" stroke="#343400" stroke-width="0.9" />
<line x1="288.5" y1="146" x2="288.5" y2="143.06259191915828" stroke="#383800" stroke-width="0.9" />
<line x1="290.5" y1="38.3" x2="290.5" y2="44.57142958595323" stroke="#343400" stroke-width="0.9" />
<line x1="294.5" y1="146" x2="294.5" y2="142.0651220111" stroke="#383800" stroke-width="0.9" />
<line x1="302.5" y1="146" x2="302.5" y2="143.84238861747042" stroke="#383800" stroke-width="0.9" />
<line x1="305.5" y1="38.3" x2="305.5" y2="46.14113345382469" stroke="#343400" stroke-width="0.9" />
<line x1="306.5" y1="146" x2="306.5" y2="136.96483552650184" stroke="#383800" stroke-width="0.9" />
<line x1="308.5" y1="146" x2="308.5" y2="142.50652855296175" stroke="#383800" stroke-width="0.9" />
<line x1="309.5" y1="38.3" x2="309.5" y2="46.56102955593144" stroke="#343400" stroke-width="0.9" />
<line x1="309.5" y1="146" x2="309.5" y2="142.80584504836247" stroke="#383800" stroke-width="0.9" />
<line x1="310.5" y1="146" x2="310.5" y2="142.62216605973674" stroke="#383800" stroke-width="0.9" />
<line x1="312.5" y1="38.3" x2="312.5" y2="46.00258196234114" stroke="#343400" stroke-width="0.9" />
<line x1="312.5" y1="146" x2="312.5" y2="142.2576772447761" stroke="#383800" stroke-width="0.9" />
<line x1="315.5" y1="38.3" x2="315.5" y2="40.251733186950254" stroke="#343400" stroke-width="0.9" />
<line x1="318.5" y1="38.3" x2="318.5" y2="42.292853971072816" stroke="#343400" stroke-width="0.9" />
<line x1="319.5" y1="38.3" x2="319.5" y2="41.76836887079737" stroke="#343400" stroke-width="0.9" />
<line x1="319.5" y1="146" x2="319.5" y2="143.63769585489206" stroke="#383800" stroke-width="0.9" />
<line x1="320.5" y1="146" x2="320.5" y2="142.02398839461114" stroke="#383800" stroke-width="0.9" />
<line x1="322.5" y1="146" x2="322.5" y2="138.87025007988856" stroke="#383800" stroke-width="0.9" />
<line x1="325.5" y1="38.3" x2="325.5" y2="40.302472780544576" stroke="#343400" stroke-width="0.9" />
<line x1="325.5" y1="146" x2="325.5" y2="144.37250624159705" stroke="#383800" stroke-width="0.9" />
<line x1="328.5" y1="146" x2="328.5" y2="143.50650829221766" stroke="#383800" stroke-width="0.9" />
<line x1="329.5" y1="38.3" x2="329.5" y2="44.200177956487885" stroke="#343400" stroke-width="0.9" />
<line x1="332.5" y1="146" x2="332.5" y2="136.04142121520968" stroke="#383800" stroke-width="0.9" />
<line x1="333.5" y1="38.3" x2="333.5" y2="40.43965547720282" stroke="#343400" stroke-width="0.9" />
<line x1="335.5" y1="146" x2="335.5" y2="137.45195865111162" stroke="#383800" stroke-width="0.9" />
<line x1="337.5" y1="38.3" x2="337.5" y2="41.687376867342316" stroke="#343400" stroke-width="0.9" />
<line x1="338.5" y1="146" x2="338.5" y2="142.60525550222928" stroke="#383800" stroke-width="0.9" />
<line x1="339.5" y1="38.3" x2="339.5" y2="40.44252632465303" stroke="#343400" stroke-width="0.9" />
<line x1="339.5" y1="146" x2="339.5" y2="144.0785570807497" stroke="#383800" stroke-width="0.9" />
<line x1="340.5" y1="38.3" x2="340.5" y2="41.49410673700589" stroke="#343400" stroke-width="0.9" />
<line x1="340.5" y1="146" x2="340.5" y2="144.01224061103818" stroke="#383800" stroke-width="0.9" />
<line x1="341.5" y1="38.3" x2="341.5" y2="44.07193308824489" stroke="#343400" stroke-width="0.9" />
<line x1="343.5" y1="38.3" x2="343.5" y2="40.04246856432296" stroke="#343400" stroke-width="0.9" />
<line x1="347.5" y1="146" x2="347.5" y2="144.3581840064332" stroke="#383800" stroke-width="0.9" />
<line x1="349.5" y1="38.3" x2="349.5" y2="44.23238875243008" stroke="#343400" stroke-width="0.9" />
<line x1="350.5" y1="38.3" x2="350.5" y2="41.89890839264823" stroke="#343400" stroke-width="0.9" />
<line x1="351.5" y1="38.3" x2="351.5" y2="40.59516713425861" stroke="#343400" stroke-width="0.9" />
<line x1="352.5" y1="38.3" x2="352.5" y2="43.498985242906976" stroke="#343400" stroke-width="0.9" />
<line x1="353.5" y1="146" x2="353.5" y2="143.78441712410768" stroke="#383800" stroke-width="0.9" />
<line x1="354.5" y1="38.3" x2="354.5" y2="40.710699878485116" stroke="#343400" stroke-width="0.9" />
<line x1="356.5" y1="38.3" x2="356.5" y2="42.040498665016024" stroke="#343400" stroke-width="0.9" />
<line x1="356.5" y1="146" x2="356.5" y2="143.7661889429325" stroke="#383800" stroke-width="0.9" />
<line x1="357.5" y1="146" x2="357.5" y2="139.295470196352" stroke="#383800" stroke-width="0.9" />
<line x1="358.5" y1="38.3" x2="358.5" y2="41.88061188354429" stroke="#343400" stroke-width="0.9" />
<line x1="359.5" y1="38.3" x2="359.5" y2="42.07995344268047" stroke="#343400" stroke-width="0.9" />
<line x1="359.5" y1="146" x2="359.5" y2="144.15481376567163" stroke="#383800" stroke-width="0.9" />
<line x1="360.5" y1="38.3" x2="360.5" y2="45.790664017309965" stroke="#343400" stroke-width="0.9" />
<line x1="360.5" y1="146" x2="360.5" y2="144.28144746479904" stroke="#383800" stroke-width="0.9" />
<line x1="362.5" y1="38.3" x2="362.5" y2="41.33108329828641" stroke="#343400" stroke-width="0.9" />
<line x1="364.5" y1="38.3" x2="364.5" y2="41.63178813233156" stroke="#343400" stroke-width="0.9" />
<line x1="365.5" y1="146" x2="365.5" y2="139.32390299879916" stroke="#383800" stroke-width="0.9" />
<line x1="367.5" y1="146" x2="367.5" y2="138.6169282893359" stroke="#383800" stroke-width="0.9" />
<line x1="368.5" y1="146" x2="368.5" y2="142.42094294008402" stroke="#383800" stroke-width="0.9" />
<line x1="369.5" y1="146" x2="369.5" y2="143.01276237781954" stroke="#383800" stroke-width="0.9" />
<line x1="370.5" y1="38.3" x2="370.5" y2="40.914418468787055" stroke="#343400" stroke-width="0.9" />
<line x1="371.5" y1="38.3" x2="371.5" y2="41.84133880939419" stroke="#343400" stroke-width="0.9" />
<polyline points="10.0,94.0 11.0,99.2 12.0,103.1 13.0,108.2 14.0,111.3 15.0,116.9 16.0,121.0 17.0,124.0 18.0,127.6 19.0,130.9 20.0,133.9 21.0,135.6 22.0,139.7 23.0,140.4 24.0,142.0 25.0,143.2 26.0,144.4 27.0,145.9 28.0,144.7 29.0,144.5 30.0,145.0 31.0,143.1 32.0,141.3 33.0,140.6 34.0,138.5 35.0,135.9 36.0,133.5 37.0,129.3 38.0,127.3 39.0,123.5 40.0,118.4 41.0,114.5 42.0,111.0 43.0,106.7 44.0,101.8 45.0,97.0 46.0,93.0 47.0,88.0 48.0,84.3 49.0,80.3 50.0,74.6 51.0,71.2 52.0,67.4 53.0,62.5 54.0,60.0 55.0,56.7 56.0,52.6 57.0,49.8 58.0,48.0 59.0,45.2 60.0,43.1 61.0,42.6 62.0,41.1 63.0,39.6 64.0,39.1 65.0,39.3 66.0,39.9 67.0,41.7 68.0,42.5 69.0,44.3 70.0,46.0 71.0,48.4 72.0,49.5 73.0,53.3 74.0,57.3 75.0,60.7 76.0,63.2 77.0,67.4 78.0,71.9 79.0,75.7 80.0,80.4 81.0,84.0 82.0,89.2 83.0,93.9 84.0,97.5 85.0,102.3 86.0,108.2 87.0,112.1 88.0,116.6 89.0,120.1 90.0,124.2 91.0,127.9 92.0,131.2 93.0,132.7 94.0,136.5 95.0,138.2 96.0,141.0 97.0,142.0 98.0,143.9 99.0,145.5 100.0,145.5 101.0,145.1 102.0,145.3 103.0,144.6 104.0,144.5 105.0,142.0 106.0,140.3 107.0,138.8 108.0,135.4 109.0,133.6 110.0,131.2 111.0,127.0 112.0,123.0 113.0,119.6 114.0,115.7 115.0,110.8 116.0,106.4 117.0,102.0 118.0,97.8 119.0,93.5 120.0,88.7 121.0,84.1 122.0,79.3 123.0,75.8 124.0,72.1 125.0,67.6 126.0,63.6 127.0,60.0 128.0,55.8 129.0,53.5 130.0,50.1 131.0,47.7 132.0,45.6 133.0,43.4 134.0,41.6 135.0,40.3 136.0,39.5 137.0,39.6 138.0,39.3 139.0,40.1 140.0,39.8 141.0,41.6 142.0,44.0 143.0,44.8 144.0,47.6 145.0,50.1 146.0,52.6 147.0,57.0 148.0,59.2 149.0,63.7 150.0,66.5 151.0,70.5 152.0,76.2 153.0,79.8 154.0,83.5 155.0,88.7 156.0,93.3 157.0,98.4 158.0,101.8 159.0,106.4 160.0,112.0 161.0,115.8 162.0,118.8 163.0,123.0 164.0,126.6 165.0,130.5 166.0,133.4 167.0,136.6 168.0,139.0 169.0,140.6 170.0,142.7 171.0,144.1 172.0,145.1 173.0,145.2 174.0,146.0 175.0,145.7 176.0,145.5 177.0,143.2 178.0,143.2 179.0,139.9 180.0,139.3 181.0,136.5 182.0,133.7 183.0,131.5 184.0,127.5 185.0,123.7 186.0,120.5 187.0,116.7 188.0,112.1 189.0,107.3 190.0,103.0 191.0,98.6 192.0,94.5 193.0,89.2 194.0,84.8 195.0,80.6 196.0,75.9 197.0,71.6 198.0,68.3 199.0,64.5 200.0,60.1 201.0,56.5 202.0,52.8 203.0,50.1 204.0,47.2 205.0,45.7 206.0,43.8 207.0,41.3 208.0,41.6 209.0,39.7 210.0,40.2 211.0,40.1 212.0,40.7 213.0,40.1 214.0,41.6 215.0,43.9 216.0,44.2 217.0,46.4 218.0,49.9 219.0,52.6 220.0,56.6 221.0,59.7 222.0,62.9 223.0,67.7 224.0,70.9 225.0,75.1 226.0,79.8 227.0,83.7 228.0,88.1 229.0,93.1 230.0,97.2 231.0,102.8 232.0,106.8 233.0,110.8 234.0,114.3 235.0,118.8 236.0,122.7 237.0,126.6 238.0,130.0 239.0,133.6 240.0,136.6 241.0,138.2 242.0,140.2 243.0,142.3 244.0,144.4 245.0,144.3 246.0,145.3 247.0,146.1 248.0,144.8 249.0,144.5 250.0,144.8 251.0,143.2 252.0,141.0 253.0,138.3 254.0,137.3 255.0,134.3 256.0,131.5 257.0,128.6 258.0,124.9 259.0,120.3 260.0,115.8 261.0,111.9 262.0,108.0 263.0,103.6 264.0,98.5 265.0,94.0 266.0,90.2 267.0,85.6 268.0,80.7 269.0,77.5 270.0,72.5 271.0,67.3 272.0,64.1 273.0,61.0 274.0,56.6 275.0,54.1 276.0,49.9 277.0,47.8 278.0,46.4 279.0,44.0 280.0,42.5 281.0,40.4 282.0,40.1 283.0,39.7 284.0,39.1 285.0,40.1 286.0,40.6 287.0,42.5 288.0,43.2 289.0,44.7 290.0,46.3 291.0,48.9 292.0,52.8 293.0,54.8 294.0,58.1 295.0,61.9 296.0,66.4 297.0,71.0 298.0,74.8 299.0,79.5 300.0,82.6 301.0,87.1 302.0,93.0 303.0,96.7 304.0,102.0 305.0,105.8 306.0,109.8 307.0,114.2 308.0,117.9 309.0,123.2 310.0,126.3 311.0,129.3 312.0,132.6 313.0,135.3 314.0,137.2 315.0,140.8 316.0,142.1 317.0,144.2 318.0,144.4 319.0,145.4 320.0,145.0 321.0,144.6 322.0,145.7 323.0,144.7 324.0,142.5 325.0,141.9 326.0,139.8 327.0,136.5 328.0,134.4 329.0,132.1 330.0,128.0 331.0,125.3 332.0,120.3 333.0,116.6 334.0,113.1 335.0,107.9 336.0,103.7 337.0,100.2 338.0,95.0 339.0,91.0 340.0,85.4 341.0,80.8 342.0,76.8 343.0,72.2 344.0,69.4 345.0,64.2 346.0,60.9 347.0,56.6 348.0,54.1 349.0,50.8 350.0,48.2 351.0,45.2 352.0,43.3 353.0,42.9 354.0,40.8 355.0,39.7 356.0,39.1 357.0,39.1 358.0,39.3 359.0,39.6 360.0,41.8 361.0,42.6 362.0,44.0 363.0,47.2 364.0,48.5 365.0,51.6 366.0,55.7 367.0,57.8 368.0,62.0 369.0,66.6 370.0,70.6 371.0,73.6 372.0,78.3 373.0,83.4" fill="none" stroke="#c8c828" stroke-width="1.2" stroke-linejoin="round"/>
<rect x="190" y="38" width="4" height="108" fill="#f4f400"/>
<polygon points="192,161.5 189.7,166.4 194.3,166.4" fill="#f0f000"/>
<polygon points="192,307.5 189.7,312.4 194.3,312.4" fill="#f0f000"/>
<polygon points="374,92.3 379,89.9 379,94.8" fill="#f0f000"/>
<polyline points="4.5,92.3 10.5,92.3" stroke="#d8d820" stroke-width="1.2"/>
<line x1="46.72" y1="168.8" x2="46.72" y2="307.4" stroke="#2c2c2c" stroke-width="1" />
<line x1="83.04" y1="168.8" x2="83.04" y2="307.4" stroke="#2c2c2c" stroke-width="1" />
<line x1="119.36" y1="168.8" x2="119.36" y2="307.4" stroke="#2c2c2c" stroke-width="1" />
<line x1="155.68" y1="168.8" x2="155.68" y2="307.4" stroke="#2c2c2c" stroke-width="1" />
<line x1="192.00" y1="168.8" x2="192.00" y2="307.4" stroke="#2c2c2c" stroke-width="1" />
<line x1="228.32" y1="168.8" x2="228.32" y2="307.4" stroke="#2c2c2c" stroke-width="1" />
<line x1="264.64" y1="168.8" x2="264.64" y2="307.4" stroke="#2c2c2c" stroke-width="1" />
<line x1="300.96" y1="168.8" x2="300.96" y2="307.4" stroke="#2c2c2c" stroke-width="1" />
<line x1="337.28" y1="168.8" x2="337.28" y2="307.4" stroke="#2c2c2c" stroke-width="1" />
<line x1="10.4" y1="186.12" x2="373.6" y2="186.12" stroke="#2c2c2c" stroke-width="1" />
<line x1="10.4" y1="203.45" x2="373.6" y2="203.45" stroke="#2c2c2c" stroke-width="1" />
<line x1="10.4" y1="220.78" x2="373.6" y2="220.78" stroke="#2c2c2c" stroke-width="1" />
<line x1="10.4" y1="238.10" x2="373.6" y2="238.10" stroke="#2c2c2c" stroke-width="1" />
<line x1="10.4" y1="255.42" x2="373.6" y2="255.42" stroke="#2c2c2c" stroke-width="1" />
<line x1="10.4" y1="272.75" x2="373.6" y2="272.75" stroke="#2c2c2c" stroke-width="1" />
<line x1="10.4" y1="290.07" x2="373.6" y2="290.07" stroke="#2c2c2c" stroke-width="1" />
<rect x="10.4" y="168.8" width="363.20" height="138.60" fill="none" stroke="#444444"/>
<rect x="17" y="195" width="1" height="1" fill="#444"/>
<rect x="25" y="195" width="1" height="1" fill="#444"/>
<rect x="32" y="195" width="1" height="1" fill="#444"/>
<rect x="39" y="195" width="1" height="1" fill="#444"/>
<rect x="54" y="195" width="1" height="1" fill="#444"/>
<rect x="61" y="195" width="1" height="1" fill="#444"/>
<rect x="68" y="195" width="1" height="1" fill="#444"/>
<rect x="75" y="195" width="1" height="1" fill="#444"/>
<rect x="90" y="195" width="1" height="1" fill="#444"/>
<rect x="97" y="195" width="1" height="1" fill="#444"/>
<rect x="104" y="195" width="1" height="1" fill="#444"/>
<rect x="112" y="195" width="1" height="1" fill="#444"/>
<rect x="126" y="195" width="1" height="1" fill="#444"/>
<rect x="133" y="195" width="1" height="1" fill="#444"/>
<rect x="141" y="195" width="1" height="1" fill="#444"/>
<rect x="148" y="195" width="1" height="1" fill="#444"/>
<rect x="162" y="195" width="1" height="1" fill="#444"/>
<rect x="170" y="195" width="1" height="1" fill="#444"/>
<rect x="177" y="195" width="1" height="1" fill="#444"/>
<rect x="184" y="195" width="1" height="1" fill="#444"/>
<rect x="199" y="195" width="1" height="1" fill="#444"/>
<rect x="206" y="195" width="1" height="1" fill="#444"/>
<rect x="213" y="195" width="1" height="1" fill="#444"/>
<rect x="221" y="195" width="1" height="1" fill="#444"/>
<rect x="235" y="195" width="1" height="1" fill="#444"/>
<rect x="242" y="195" width="1" height="1" fill="#444"/>
<rect x="250" y="195" width="1" height="1" fill="#444"/>
<rect x="257" y="195" width="1" height="1" fill="#444"/>
<rect x="271" y="195" width="1" height="1" fill="#444"/>
<rect x="279" y="195" width="1" height="1" fill="#444"/>
<rect x="286" y="195" width="1" height="1" fill="#444"/>
<rect x="293" y="195" width="1" height="1" fill="#444"/>
<rect x="308" y="195" width="1" height="1" fill="#444"/>
<rect x="315" y="195" width="1" height="1" fill="#444"/>
<rect x="322" y="195" width="1" height="1" fill="#444"/>
<rect x="329" y="195" width="1" height="1" fill="#444"/>
<rect x="344" y="195" width="1" height="1" fill="#444"/>
<rect x="351" y="195" width="1" height="1" fill="#444"/>
<rect x="358" y="195" width="1" height="1" fill="#444"/>
<rect x="366" y="195" width="1" height="1" fill="#444"/>
<rect x="17" y="281" width="1" height="1" fill="#444"/>
<rect x="25" y="281" width="1" height="1" fill="#444"/>
<rect x="32" y="281" width="1" height="1" fill="#444"/>
<rect x="39" y="281" width="1" height="1" fill="#444"/>
<rect x="54" y="281" width="1" height="1" fill="#444"/>
<rect x="61" y="281" width="1" height="1" fill="#444"/>
<rect x="68" y="281" width="1" height="1" fill="#444"/>
<rect x="75" y="281" width="1" height="1" fill="#444"/>
<rect x="90" y="281" width="1" height="1" fill="#444"/>
<rect x="97" y="281" width="1" height="1" fill="#444"/>
<rect x="104" y="281" width="1" height="1" fill="#444"/>
<rect x="112" y="281" width="1" height="1" fill="#444"/>
<rect x="126" y="281" width="1" height="1" fill="#444"/>
<rect x="133" y="281" width="1" height="1" fill="#444"/>
<rect x="141" y="281" width="1" height="1" fill="#444"/>
<rect x="148" y="281" width="1" height="1" fill="#444"/>
<rect x="162" y="281" width="1" height="1" fill="#444"/>
<rect x="170" y="281" width="1" height="1" fill="#444"/>
<rect x="177" y="281" width="1" height="1" fill="#444"/>
<rect x="184" y="281" width="1" height="1" fill="#444"/>
<rect x="199" y="281" width="1" height="1" fill="#444"/>
<rect x="206" y="281" width="1" height="1" fill="#444"/>
<rect x="213" y="281" width="1" height="1" fill="#444"/>
<rect x="221" y="281" width="1" height="1" fill="#444"/>
<rect x="235" y="281" width="1" height="1" fill="#444"/>
<rect x="242" y="281" width="1" height="1" fill="#444"/>
<rect x="250" y="281" width="1" height="1" fill="#444"/>
<rect x="257" y="281" width="1" height="1" fill="#444"/>
<rect x="271" y="281" width="1" height="1" fill="#444"/>
<rect x="279" y="281" width="1" height="1" fill="#444"/>
<rect x="286" y="281" width="1" height="1" fill="#444"/>
<rect x="293" y="281" width="1" height="1" fill="#444"/>
<rect x="308" y="281" width="1" height="1" fill="#444"/>
<rect x="315" y="281" width="1" height="1" fill="#444"/>
<rect x="322" y="281" width="1" height="1" fill="#444"/>
<rect x="329" y="281" width="1" height="1" fill="#444"/>
<rect x="344" y="281" width="1" height="1" fill="#444"/>
<rect x="351" y="281" width="1" height="1" fill="#444"/>
<rect x="358" y="281" width="1" height="1" fill="#444"/>
<rect x="366" y="281" width="1" height="1" fill="#444"/>
<path d="M11.5,201.5V242.5M14.5,220.2V246.0M16.5,225.2V236.0M19.5,219.7V268.9M21.5,222.1V235.4M23.5,220.6V248.3M25.5,205.7V237.1M28.5,220.9V251.2M31.5,233.9V243.7M33.5,220.3V249.5M36.5,220.8V247.7M38.5,210.3V262.4M41.5,224.4V258.4M44.5,223.2V249.0M47.5,211.3V242.3M50.5,206.0V235.8M52.5,228.7V251.2M54.5,202.0V245.8M56.5,225.1V253.9M59.5,225.9V255.9M61.5,199.1V250.6M64.5,216.4V246.4M67.5,226.1V247.0M69.5,220.1V251.3M71.5,225.3V268.1M73.5,223.6V255.7M76.5,220.7V235.6M79.5,218.5V240.3M82.5,223.5V271.4M85.5,210.6V249.7M88.5,229.1V251.2M90.5,227.1V252.3M92.5,224.5V238.9M95.5,209.2V243.4M98.5,221.5V258.2M100.5,213.2V248.4M103.5,225.6V246.0M105.5,218.1V247.8M108.5,204.8V261.1M111.5,198.1V237.4M114.5,221.0V255.7M117.5,224.7V236.1M120.5,227.1V244.6M123.5,219.9V262.3M125.5,224.9V238.9M128.5,210.0V242.2M131.5,207.7V238.2M134.5,225.1V259.1M137.5,223.2V265.2M139.5,200.5V248.9M142.5,227.4V244.3M144.5,240.3V264.0M147.5,227.0V240.8M149.5,220.0V239.5M151.5,212.4V237.5M154.5,224.8V253.1M157.5,218.4V239.3M160.5,201.0V244.1M162.5,224.5V259.8M164.5,228.5V257.5M166.5,229.5V256.1M169.5,226.6V251.2M172.5,195.1V246.3M175.5,229.2V272.2M178.5,215.5V258.9M181.5,201.8V231.7M184.5,206.2V260.1M186.5,233.1V248.2M189.5,214.3V254.3M192.5,218.6V245.9M195.5,203.1V246.6M198.5,210.8V245.2M200.5,232.7V256.1M203.5,224.0V247.7M205.5,213.4V247.1M208.5,235.3V251.2M211.5,216.3V255.8M213.5,229.1V250.0M216.5,217.1V256.6M218.5,213.6V242.9M221.5,210.3V241.2M224.5,219.4V234.4M226.5,225.1V247.1M229.5,220.8V243.7M231.5,213.4V256.3M233.5,226.9V254.1M235.5,234.9V253.5M237.5,228.7V245.4M240.5,230.7V255.8M243.5,217.9V254.5M246.5,201.5V253.4M249.5,218.4V241.6M251.5,235.2V265.4M254.5,209.0V238.9M257.5,209.8V237.1M260.5,203.2V247.3M263.5,223.8V276.0M266.5,215.7V240.0M269.5,217.5V251.5M272.5,236.6V251.6M275.5,219.7V254.3M277.5,230.3V253.8M280.5,216.5V239.3M283.5,239.3V271.6M285.5,215.4V254.0M288.5,226.1V249.3M290.5,236.1V250.6M293.5,196.0V233.4M296.5,212.6V239.4M298.5,222.7V257.1M301.5,226.5V258.6M303.5,212.6V249.7M305.5,227.2V257.3M307.5,223.9V241.9M310.5,204.3V234.0M313.5,233.5V246.3M316.5,214.7V267.4M319.5,193.8V247.2M322.5,216.2V256.9M324.5,221.7V244.2M327.5,213.8V238.9M329.5,220.9V252.9M331.5,216.2V247.5M333.5,217.6V249.4M336.5,219.7V246.0M338.5,230.3V275.1M340.5,222.4V254.0M342.5,222.1V243.9M345.5,223.1V257.8M348.5,219.1V240.2M351.5,226.1V250.9M354.5,235.4V254.6M356.5,225.0V258.2M358.5,211.7V249.9M360.5,226.2V263.4M363.5,232.1V251.2M366.5,225.6V238.4M368.5,198.8V252.4M370.5,199.8V254.0M372.5,226.2V256.5" fill="none" stroke="#d8aa22" stroke-width="1.2"/>
<path d="M11.0,236.5L12.5,233.4L14.0,234.1L15.5,237.8L17.0,237.8L18.5,245.6L20.0,237.8L21.5,240.0L23.0,244.2L24.5,240.6L26.0,232.3L27.5,233.4L29.0,229.8L30.5,248.2L32.0,235.9L33.5,234.0L35.0,236.3L36.5,232.2L38.0,231.9L39.5,235.2L41.0,238.5L42.5,225.7L44.0,239.4L45.5,248.6L47.0,231.8L48.5,226.8L50.0,235.9L51.5,235.7L53.0,236.7L54.5,234.4L56.0,230.2L57.5,234.6L59.0,242.9L60.5,238.9L62.0,246.6L63.5,240.1L65.0,240.9L66.5,237.3L68.0,228.1L69.5,240.1L71.0,243.3L72.5,234.1L74.0,237.8L75.5,228.9L77.0,236.5L78.5,228.5L80.0,235.0L81.5,244.7L83.0,234.9L84.5,237.4L86.0,225.2L87.5,237.7L89.0,234.0L90.5,232.2L92.0,229.0L93.5,241.1L95.0,242.2L96.5,232.8L98.0,235.4L99.5,227.4L101.0,230.7L102.5,228.5L104.0,245.0L105.5,239.8L107.0,238.7L108.5,226.0L110.0,238.1L111.5,231.9L113.0,228.9L114.5,231.5L116.0,241.1L117.5,230.0L119.0,247.0L120.5,230.4L122.0,243.9L123.5,238.2L125.0,228.9L126.5,240.7L128.0,236.3L129.5,230.1L131.0,224.9L132.5,245.6L134.0,236.7L135.5,244.4L137.0,237.8L138.5,227.0L140.0,240.7L141.5,231.9L143.0,233.8L144.5,240.3L146.0,223.8L147.5,226.6L149.0,240.4L150.5,230.8L152.0,231.2L153.5,238.2L155.0,240.1L156.5,241.5L158.0,240.7L159.5,238.5L161.0,234.0L162.5,235.8L164.0,225.9L165.5,251.6L167.0,240.3L168.5,247.1L170.0,229.3L171.5,239.6L173.0,235.7L174.5,239.7L176.0,231.4L177.5,231.3L179.0,240.2L180.5,231.9L182.0,233.8L183.5,238.5L185.0,238.3L186.5,240.3L188.0,240.5L189.5,224.1L191.0,240.5L192.5,234.2L194.0,230.4L195.5,246.6L197.0,237.6L198.5,227.6L200.0,245.3L201.5,223.2L203.0,234.9L204.5,236.0L206.0,237.2L207.5,233.3L209.0,235.7L210.5,243.2L212.0,230.1L213.5,227.3L215.0,227.8L216.5,220.0L218.0,234.5L219.5,225.5L221.0,233.9L222.5,232.7L224.0,235.6L225.5,230.9L227.0,229.3L228.5,239.1L230.0,233.2L231.5,239.6L233.0,234.0L234.5,240.4L236.0,233.2L237.5,226.7L239.0,245.6L240.5,231.3L242.0,243.6L243.5,238.7L245.0,226.3L246.5,235.9L248.0,247.7L249.5,236.9L251.0,237.8L252.5,233.5L254.0,231.8L255.5,239.1L257.0,232.1L258.5,235.2L260.0,230.3L261.5,231.4L263.0,242.0L264.5,233.3L266.0,249.6L267.5,236.1L269.0,235.0L270.5,239.3L272.0,241.7L273.5,232.0L275.0,239.2L276.5,235.4L278.0,221.1L279.5,226.4L281.0,232.4L282.5,232.3L284.0,235.7L285.5,234.1L287.0,229.6L288.5,233.7L290.0,248.2L291.5,242.9L293.0,231.0L294.5,230.1L296.0,241.1L297.5,234.6L299.0,239.9L300.5,232.5L302.0,239.0L303.5,229.4L305.0,242.6L306.5,237.7L308.0,238.7L309.5,233.0L311.0,236.3L312.5,233.5L314.0,232.9L315.5,242.3L317.0,230.0L318.5,223.6L320.0,221.8L321.5,227.2L323.0,236.5L324.5,229.9L326.0,233.8L327.5,231.0L329.0,240.8L330.5,231.2L332.0,225.5L333.5,226.0L335.0,228.1L336.5,240.7L338.0,232.1L339.5,239.5L341.0,237.3L342.5,229.0L344.0,245.9L345.5,244.4L347.0,230.4L348.5,230.6L350.0,232.5L351.5,237.4L353.0,236.9L354.5,234.4L356.0,234.2L357.5,242.8L359.0,229.3L360.5,225.6L362.0,233.5L363.5,236.8L365.0,228.1L366.5,241.5L368.0,226.8L369.5,242.2L371.0,237.3L372.5,233.0" fill="none" stroke="#b08820" stroke-width="0.9"/>
<line x1="426.64" y1="22.7" x2="426.64" y2="307.4" stroke="#2c2c2c" stroke-width="1" />
<line x1="462.98" y1="22.7" x2="462.98" y2="307.4" stroke="#2c2c2c" stroke-width="1" />
<line x1="499.32" y1="22.7" x2="499.32" y2="307.4" stroke="#2c2c2c" stroke-width="1" />
<line x1="535.66" y1="22.7" x2="535.66" y2="307.4" stroke="#2c2c2c" stroke-width="1" />
<line x1="572.00" y1="22.7" x2="572.00" y2="307.4" stroke="#2c2c2c" stroke-width="1" />
<line x1="608.34" y1="22.7" x2="608.34" y2="307.4" stroke="#2c2c2c" stroke-width="1" />
<line x1="644.68" y1="22.7" x2="644.68" y2="307.4" stroke="#2c2c2c" stroke-width="1" />
<line x1="681.02" y1="22.7" x2="681.02" y2="307.4" stroke="#2c2c2c" stroke-width="1" />
<line x1="717.36" y1="22.7" x2="717.36" y2="307.4" stroke="#2c2c2c" stroke-width="1" />
<line x1="390.3" y1="58.29" x2="753.7" y2="58.29" stroke="#2c2c2c" stroke-width="1" />
<line x1="390.3" y1="93.88" x2="753.7" y2="93.88" stroke="#2c2c2c" stroke-width="1" />
<line x1="390.3" y1="129.46" x2="753.7" y2="129.46" stroke="#2c2c2c" stroke-width="1" />
<line x1="390.3" y1="165.05" x2="753.7" y2="165.05" stroke="#2c2c2c" stroke-width="1" />
<line x1="390.3" y1="200.64" x2="753.7" y2="200.64" stroke="#2c2c2c" stroke-width="1" />
<line x1="390.3" y1="236.22" x2="753.7" y2="236.22" stroke="#2c2c2c" stroke-width="1" />
<line x1="390.3" y1="271.81" x2="753.7" y2="271.81" stroke="#2c2c2c" stroke-width="1" />
<rect x="390.3" y="22.7" width="363.40" height="284.70" fill="none" stroke="#444444"/>
<rect x="397" y="76" width="1" height="1" fill="#444"/>
<rect x="405" y="76" width="1" height="1" fill="#444"/>
<rect x="412" y="76" width="1" height="1" fill="#444"/>
<rect x="419" y="76" width="1" height="1" fill="#444"/>
<rect x="434" y="76" width="1" height="1" fill="#444"/>
<rect x="441" y="76" width="1" height="1" fill="#444"/>
<rect x="448" y="76" width="1" height="1" fill="#444"/>
<rect x="455" y="76" width="1" height="1" fill="#444"/>
<rect x="470" y="76" width="1" height="1" fill="#444"/>
<rect x="477" y="76" width="1" height="1" fill="#444"/>
<rect x="484" y="76" width="1" height="1" fill="#444"/>
<rect x="492" y="76" width="1" height="1" fill="#444"/>
<rect x="506" y="76" width="1" height="1" fill="#444"/>
<rect x="513" y="76" width="1" height="1" fill="#444"/>
<rect x="521" y="76" width="1" height="1" fill="#444"/>
<rect x="528" y="76" width="1" height="1" fill="#444"/>
<rect x="542" y="76" width="1" height="1" fill="#444"/>
<rect x="550" y="76" width="1" height="1" fill="#444"/>
<rect x="557" y="76" width="1" height="1" fill="#444"/>
<rect x="564" y="76" width="1" height="1" fill="#444"/>
<rect x="579" y="76" width="1" height="1" fill="#444"/>
<rect x="586" y="76" width="1" height="1" fill="#444"/>
<rect x="593" y="76" width="1" height="1" fill="#444"/>
<rect x="601" y="76" width="1" height="1" fill="#444"/>
<rect x="615" y="76" width="1" height="1" fill="#444"/>
<rect x="622" y="76" width="1" height="1" fill="#444"/>
<rect x="630" y="76" width="1" height="1" fill="#444"/>
<rect x="637" y="76" width="1" height="1" fill="#444"/>
<rect x="651" y="76" width="1" height="1" fill="#444"/>
<rect x="659" y="76" width="1" height="1" fill="#444"/>
<rect x="666" y="76" width="1" height="1" fill="#444"/>
<rect x="673" y="76" width="1" height="1" fill="#444"/>
<rect x="688" y="76" width="1" height="1" fill="#444"/>
<rect x="695" y="76" width="1" height="1" fill="#444"/>
<rect x="702" y="76" width="1" height="1" fill="#444"/>
<rect x="709" y="76" width="1" height="1" fill="#444"/>
<rect x="724" y="76" width="1" height="1" fill="#444"/>
<rect x="731" y="76" width="1" height="1" fill="#444"/>
<rect x="738" y="76" width="1" height="1" fill="#444"/>
<rect x="746" y="76" width="1" height="1" fill="#444"/>
<rect x="397" y="254" width="1" height="1" fill="#444"/>
<rect x="405" y="254" width="1" height="1" fill="#444"/>
<rect x="412" y="254" width="1" height="1" fill="#444"/>
<rect x="419" y="254" width="1" height="1" fill="#444"/>
<rect x="434" y="254" width="1" height="1" fill="#444"/>
<rect x="441" y="254" width="1" height="1" fill="#444"/>
<rect x="448" y="254" width="1" height="1" fill="#444"/>
<rect x="455" y="254" width="1" height="1" fill="#444"/>
<rect x="470" y="254" width="1" height="1" fill="#444"/>
<rect x="477" y="254" width="1" height="1" fill="#444"/>
<rect x="484" y="254" width="1" height="1" fill="#444"/>
<rect x="492" y="254" width="1" height="1" fill="#444"/>
<rect x="506" y="254" width="1" height="1" fill="#444"/>
<rect x="513" y="254" width="1" height="1" fill="#444"/>
<rect x="521" y="254" width="1" height="1" fill="#444"/>
<rect x="528" y="254" width="1" height="1" fill="#444"/>
<rect x="542" y="254" width="1" height="1" fill="#444"/>
<rect x="550" y="254" width="1" height="1" fill="#444"/>
<rect x="557" y="254" width="1" height="1" fill="#444"/>
<rect x="564" y="254" width="1" height="1" fill="#444"/>
<rect x="579" y="254" width="1" height="1" fill="#444"/>
<rect x="586" y="254" width="1" height="1" fill="#444"/>
<rect x="593" y="254" width="1" height="1" fill="#444"/>
<rect x="601" y="254" width="1" height="1" fill="#444"/>
<rect x="615" y="254" width="1" height="1" fill="#444"/>
<rect x="622" y="254" width="1" height="1" fill="#444"/>
<rect x="630" y="254" width="1" height="1" fill="#444"/>
<rect x="637" y="254" width="1" height="1" fill="#444"/>
<rect x="651" y="254" width="1" height="1" fill="#444"/>
<rect x="659" y="254" width="1" height="1" fill="#444"/>
<rect x="666" y="254" width="1" height="1" fill="#444"/>
<rect x="673" y="254" width="1" height="1" fill="#444"/>
<rect x="688" y="254" width="1" height="1" fill="#444"/>
<rect x="695" y="254" width="1" height="1" fill="#444"/>
<rect x="702" y="254" width="1" height="1" fill="#444"/>
<rect x="709" y="254" width="1" height="1" fill="#444"/>
<rect x="724" y="254" width="1" height="1" fill="#444"/>
<rect x="731" y="254" width="1" height="1" fill="#444"/>
<rect x="738" y="254" width="1" height="1" fill="#444"/>
<rect x="746" y="254" width="1" height="1" fill="#444"/>
<line x1="390" y1="165.5" x2="753" y2="165.5" stroke="#464646" stroke-width="1" />
<line x1="572.5" y1="22" x2="572.5" y2="307" stroke="#464646" stroke-width="1" />
<line x1="397.5" y1="164.5" x2="397.5" y2="166.5" stroke="#505050" stroke-width="1" />
<line x1="405.5" y1="164.5" x2="405.5" y2="166.5" stroke="#505050" stroke-width="1" />
<line x1="412.5" y1="164.5" x2="412.5" y2="166.5" stroke="#505050" stroke-width="1" />
<line x1="419.5" y1="164.5" x2="419.5" y2="166.5" stroke="#505050" stroke-width="1" />
<line x1="434.5" y1="164.5" x2="434.5" y2="166.5" stroke="#505050" stroke-width="1" />
<line x1="441.5" y1="164.5" x2="441.5" y2="166.5" stroke="#505050" stroke-width="1" />
<line x1="448.5" y1="164.5" x2="448.5" y2="166.5" stroke="#505050" stroke-width="1" />
<line x1="455.5" y1="164.5" x2="455.5" y2="166.5" stroke="#505050" stroke-width="1" />
<line x1="470.5" y1="164.5" x2="470.5" y2="166.5" stroke="#505050" stroke-width="1" />
<line x1="477.5" y1="164.5" x2="477.5" y2="166.5" stroke="#505050" stroke-width="1" />
<line x1="484.5" y1="164.5" x2="484.5" y2="166.5" stroke="#505050" stroke-width="1" />
<line x1="492.5" y1="164.5" x2="492.5" y2="166.5" stroke="#505050" stroke-width="1" />
<line x1="506.5" y1="164.5" x2="506.5" y2="166.5" stroke="#505050" stroke-width="1" />
<line x1="513.5" y1="164.5" x2="513.5" y2="166.5" stroke="#505050" stroke-width="1" />
<line x1="521.5" y1="164.5" x2="521.5" y2="166.5" stroke="#505050" stroke-width="1" />
<line x1="528.5" y1="164.5" x2="528.5" y2="166.5" stroke="#505050" stroke-width="1" />
<line x1="542.5" y1="164.5" x2="542.5" y2="166.5" stroke="#505050" stroke-width="1" />
<line x1="550.5" y1="164.5" x2="550.5" y2="166.5" stroke="#505050" stroke-width="1" />
<line x1="557.5" y1="164.5" x2="557.5" y2="166.5" stroke="#505050" stroke-width="1" />
<line x1="564.5" y1="164.5" x2="564.5" y2="166.5" stroke="#505050" stroke-width="1" />
<line x1="579.5" y1="164.5" x2="579.5" y2="166.5" stroke="#505050" stroke-width="1" />
<line x1="586.5" y1="164.5" x2="586.5" y2="166.5" stroke="#505050" stroke-width="1" />
<line x1="593.5" y1="164.5" x2="593.5" y2="166.5" stroke="#505050" stroke-width="1" />
<line x1="601.5" y1="164.5" x2="601.5" y2="166.5" stroke="#505050" stroke-width="1" />
<line x1="615.5" y1="164.5" x2="615.5" y2="166.5" stroke="#505050" stroke-width="1" />
<line x1="622.5" y1="164.5" x2="622.5" y2="166.5" stroke="#505050" stroke-width="1" />
<line x1="630.5" y1="164.5" x2="630.5" y2="166.5" stroke="#505050" stroke-width="1" />
<line x1="637.5" y1="164.5" x2="637.5" y2="166.5" stroke="#505050" stroke-width="1" />
<line x1="651.5" y1="164.5" x2="651.5" y2="166.5" stroke="#505050" stroke-width="1" />
<line x1="659.5" y1="164.5" x2="659.5" y2="166.5" stroke="#505050" stroke-width="1" />
<line x1="666.5" y1="164.5" x2="666.5" y2="166.5" stroke="#505050" stroke-width="1" />
<line x1="673.5" y1="164.5" x2="673.5" y2="166.5" stroke="#505050" stroke-width="1" />
<line x1="688.5" y1="164.5" x2="688.5" y2="166.5" stroke="#505050" stroke-width="1" />
<line x1="695.5" y1="164.5" x2="695.5" y2="166.5" stroke="#505050" stroke-width="1" />
<line x1="702.5" y1="164.5" x2="702.5" y2="166.5" stroke="#505050" stroke-width="1" />
<line x1="709.5" y1="164.5" x2="709.5" y2="166.5" stroke="#505050" stroke-width="1" />
<line x1="724.5" y1="164.5" x2="724.5" y2="166.5" stroke="#505050" stroke-width="1" />
<line x1="731.5" y1="164.5" x2="731.5" y2="166.5" stroke="#505050" stroke-width="1" />
<line x1="738.5" y1="164.5" x2="738.5" y2="166.5" stroke="#505050" stroke-width="1" />
<line x1="746.5" y1="164.5" x2="746.5" y2="166.5" stroke="#505050" stroke-width="1" />
<line x1="571.5" y1="29.5" x2="573.5" y2="29.5" stroke="#505050" stroke-width="1" />
<line x1="571.5" y1="36.5" x2="573.5" y2="36.5" stroke="#505050" stroke-width="1" />
<line x1="571.5" y1="43.5" x2="573.5" y2="43.5" stroke="#505050" stroke-width="1" />
<line x1="571.5" y1="50.5" x2="573.5" y2="50.5" stroke="#505050" stroke-width="1" />
<line x1="571.5" y1="65.5" x2="573.5" y2="65.5" stroke="#505050" stroke-width="1" />
<line x1="571.5" y1="72.5" x2="573.5" y2="72.5" stroke="#505050" stroke-width="1" />
<line x1="571.5" y1="79.5" x2="573.5" y2="79.5" stroke="#505050" stroke-width="1" />
<line x1="571.5" y1="86.5" x2="573.5" y2="86.5" stroke="#505050" stroke-width="1" />
<line x1="571.5" y1="100.5" x2="573.5" y2="100.5" stroke="#505050" stroke-width="1" />
<line x1="571.5" y1="108.5" x2="573.5" y2="108.5" stroke="#505050" stroke-width="1" />
<line x1="571.5" y1="115.5" x2="573.5" y2="115.5" stroke="#505050" stroke-width="1" />
<line x1="571.5" y1="122.5" x2="573.5" y2="122.5" stroke="#505050" stroke-width="1" />
<line x1="571.5" y1="136.5" x2="573.5" y2="136.5" stroke="#505050" stroke-width="1" />
<line x1="571.5" y1="143.5" x2="573.5" y2="143.5" stroke="#505050" stroke-width="1" />
<line x1="571.5" y1="150.5" x2="573.5" y2="150.5" stroke="#505050" stroke-width="1" />
<line x1="571.5" y1="157.5" x2="573.5" y2="157.5" stroke="#505050" stroke-width="1" />
<line x1="571.5" y1="172.5" x2="573.5" y2="172.5" stroke="#505050" stroke-width="1" />
<line x1="571.5" y1="179.5" x2="573.5" y2="179.5" stroke="#505050" stroke-width="1" />
<line x1="571.5" y1="186.5" x2="573.5" y2="186.5" stroke="#505050" stroke-width="1" />
<line x1="571.5" y1="193.5" x2="573.5" y2="193.5" stroke="#505050" stroke-width="1" />
<line x1="571.5" y1="207.5" x2="573.5" y2="207.5" stroke="#505050" stroke-width="1" />
<line x1="571.5" y1="214.5" x2="573.5" y2="214.5" stroke="#505050" stroke-width="1" />
<line x1="571.5" y1="222.5" x2="573.5" y2="222.5" stroke="#505050" stroke-width="1" />
<line x1="571.5" y1="229.5" x2="573.5" y2="229.5" stroke="#505050" stroke-width="1" />
<line x1="571.5" y1="243.5" x2="573.5" y2="243.5" stroke="#505050" stroke-width="1" />
<line x1="571.5" y1="250.5" x2="573.5" y2="250.5" stroke="#505050" stroke-width="1" />
<line x1="571.5" y1="257.5" x2="573.5" y2="257.5" stroke="#505050" stroke-width="1" />
<line x1="571.5" y1="264.5" x2="573.5" y2="264.5" stroke="#505050" stroke-width="1" />
<line x1="571.5" y1="278.5" x2="573.5" y2="278.5" stroke="#505050" stroke-width="1" />
<line x1="571.5" y1="286.5" x2="573.5" y2="286.5" stroke="#505050" stroke-width="1" />
<line x1="571.5" y1="293.5" x2="573.5" y2="293.5" stroke="#505050" stroke-width="1" />
<line x1="571.5" y1="300.5" x2="573.5" y2="300.5" stroke="#505050" stroke-width="1" />
<polygon points="390,271.5 390,271.5 423,271.5 423,271.5 425,271.5 425,269.0 427,269.0 427,271.0 440,271.0 440,270.0 444,270.0 444,265.0 446.6,265.0 446.6,270.0 448,270.0 448,266.6 458,266.6 458,270.0 460.5,270.0 460.5,260.0 462.2,260.0 462.2,261.7 463.8,261.7 463.8,260.0 465.5,260.0 465.5,270.0 468,270.0 468,244.4 469.6,244.4 469.6,252.6 472,252.6 472,255.0 473.7,255.0 473.7,259.2 477,259.2 477,256.7 478.6,256.7 478.6,228.8 481.1,228.8 481.1,248.5 482.8,248.5 482.8,234.5 484.4,234.5 484.4,239.5 486,239.5 486,227.0 487.7,227.0 487.7,224.7 489.3,224.7 489.3,238.7 491,238.7 491,228.8 493.5,228.8 493.5,221.4 495,221.4 495,216.4 496.7,216.4 496.7,207.4 498.4,207.4 498.4,205.0 500,205.0 500,204.8 501,204.8 501,195.0 503,195.0 503,190.0 505,190.0 505,202.8 506.9,202.8 506.9,186.0 508.8,186.0 508.8,183.0 510.8,183.0 510.8,181.0 513.8,181.0 513.8,197.0 515.8,197.0 515.8,208.8 518.7,208.8 518.7,181.0 520.7,181.0 520.7,175.0 522.7,175.0 522.7,172.0 524.6,172.0 524.6,155.5 526,155.5 526,145.6 527.6,145.6 527.6,132.8 529.6,132.8 529.6,134.8 531.5,134.8 531.5,111.0 534,111.0 534,86.8 535.5,86.8 535.5,96.0 536.5,96.0 536.5,141.7 540,141.7 540,93.4 542,93.4 542,106.6 543.8,106.6 543.8,65.8 545.9,65.8 545.9,126.0 548,126.0 548,129.0 549.8,129.0 549.8,142.0 551.7,142.0 551.7,96.0 553.8,96.0 553.8,111.8 555,111.8 555,60.5 557,60.5 557,89.5 559,89.5 559,105.0 561,105.0 561,151.0 563,151.0 563,137.0 564.8,137.0 564.8,131.6 566.4,131.6 566.4,98.7 568.3,98.7 568.3,113.0 570,113.0 570,114.5 572.2,114.5 572.2,154.0 574.3,154.0 574.3,155.0 576.2,155.0 576.2,127.6 578,127.6 578,140.8 580,140.8 580,146.0 582.2,146.0 582.2,150.0 585.4,150.0 585.4,125.0 587.5,125.0 587.5,165.8 589.6,165.8 589.6,143.4 591,143.4 591,192.8 593.5,192.8 593.5,201.6 596.8,201.6 596.8,173.9 598.6,173.9 598.6,167.6 600.6,167.6 600.6,192.8 602.6,192.8 602.6,170.0 604.4,170.0 604.4,209.0 606.2,209.0 606.2,197.8 608.2,197.8 608.2,179.0 610.2,179.0 610.2,167.6 612,167.6 612,216.7 613.2,216.7 613.2,206.7 615.2,206.7 615.2,215.5 617,215.5 617,221.8 619.5,221.8 619.5,224.3 621.3,224.3 621.3,242.0 623.3,242.0 623.3,239.4 625,239.4 625,247.0 627,247.0 627,235.7 628.9,235.7 628.9,245.8 633.3,245.8 633.3,233.8 635.3,233.8 635.3,236.4 637.2,236.4 637.2,254.9 639,254.9 639,249.6 640.5,249.6 640.5,252.2 643.2,252.2 643.2,258.8 647.1,258.8 647.1,257.5 648.4,257.5 648.4,264.7 649.7,264.7 649.7,257.5 651.7,257.5 651.7,269.3 653.7,269.3 653.7,259.5 655.7,259.5 655.7,269.3 657,269.3 657,257.5 659,257.5 659,266.7 661,266.7 661,269.3 664.2,269.3 664.2,266.7 666.2,266.7 666.2,270.0 668.2,270.0 668.2,264.0 670.1,264.0 670.1,269.3 672.1,269.3 672.1,271.3 675.4,271.3 675.4,269.7 681.3,269.7 681.3,271.3 686,271.3 686,269.7 687.9,269.7 687.9,271.3 689.9,271.3 689.9,269.7 691.8,269.7 691.8,271.3 693.2,271.3 693.2,269.7 697.1,269.7 697.1,271.5 753,271.5 753,271.5 753,271.5" fill="#ff5f8c"/>
<line x1="384" y1="272" x2="753" y2="272" stroke="#9a6878" stroke-width="1.3" />
<polygon points="386.5,310.6 390.7,308.4 390.7,312.8" fill="#b04070"/>
<polygon points="2.6,306.6 7.4,306.6 5,310.4" fill="#e0b020"/>
</svg>
<div class="t" style="left:2.2px;top:85.8px;font-size:5.8px;color:#d8d820;font-weight:bold">C1</div>
<div class="t" style="left:2px;top:301.6px;font-size:5.8px;color:#d8a820;font-weight:bold">C2</div>
<div class="t" style="left:383.2px;top:265.4px;font-size:5.8px;color:#c04070;font-weight:bold">F2</div>

<!-- measure table -->
<div class="row" style="top:323px"></div><div class="abs" style="left:2px;top:323px;width:748px;height:1px;background:#2e2e2e"></div>
<div class="row" style="top:342px"></div>
<div class="row" style="top:361px"></div>
<div class="row" style="top:380px"></div>
<div class="m" style="left:3px;top:314px;font-weight:bold">Measure</div>
<div class="m" style="left:40px;top:314px;width:77.5px;text-align:right">P1:freq(C1)</div>
<div class="m" style="left:3px;top:323.6px">value</div><div class="m" style="left:40px;top:323.6px;width:77.5px;text-align:right">502.31 MHz</div><div class="m" style="left:3px;top:333.1px">mean</div><div class="m" style="left:40px;top:333.1px;width:77.5px;text-align:right">500.011 MHz</div><div class="m" style="left:3px;top:342.5px">min</div><div class="m" style="left:40px;top:342.5px;width:77.5px;text-align:right">490.79 MHz</div><div class="m" style="left:3px;top:352.0px">max</div><div class="m" style="left:40px;top:352.0px;width:77.5px;text-align:right">508.41 MHz</div><div class="m" style="left:3px;top:361.4px">sdev</div><div class="m" style="left:40px;top:361.4px;width:77.5px;text-align:right">2.205 MHz</div><div class="m" style="left:3px;top:370.9px">num</div><div class="m" style="left:40px;top:370.9px;width:77.5px;text-align:right">1.417308e+6</div><div class="m" style="left:3px;top:380.3px">status</div><div class="pl" style="left:118.2px">P2:- - -</div><div class="pl" style="left:175.7px">P3:- - -</div><div class="pl" style="left:233.2px">P4:- - -</div><div class="pl" style="left:290.7px">P5:- - -</div><div class="pl" style="left:348.2px">P6:- - -</div><div class="pl" style="left:405.7px">P7:- - -</div><div class="pl" style="left:463.2px">P8:- - -</div><div class="pl" style="left:520.7px">P9:- - -</div><div class="pl" style="left:578.2px">P10:- - -</div><div class="pl" style="left:635.7px">P11:- - -</div><div class="pl" style="left:693.2px">P12:- - -</div>
<svg class="abs" style="left:108px;top:381px" width="10" height="8"><polyline points="1.5,4.5 3.5,6.5 8,1.5" fill="none" stroke="#22cc22" stroke-width="1.6"/></svg>
<div class="m" style="left:3px;top:395px">histo</div>
<svg class="abs" style="left:0;top:0" width="760" height="456"><polygon points="61,406 61,405.5 62,403.9 65,404.5 70,404.5 77,404.0 79,402.1 81.7,397.9 83.5,396.0 85,394.0 86.8,394.5 88.6,392.3 90,395.1 91.8,396.3 93.7,397.7 95.5,399.9 97.4,402.3 99.2,403.1 103,404.0 110,404.7 116,405.2 116,406" fill="#22f022"/></svg><div class="abs" style="left:2px;top:409px;width:58px;height:35.5px;background:#2e5070;border:1px solid #3a74aa;border-radius:1.5px"></div><div class="abs" style="left:2px;top:409px;width:58px;height:9px;background:#ffff00"></div><div class="t" style="top:409.87px;font-size:7.6px;color:#1a1a00;letter-spacing:0px;-webkit-text-stroke:0.3px #1a1a00;left:4.30px;">C1</div><div class="abs" style="left:40.7px;top:410px;width:17.5px;height:7px;background:#0a0a00;border-radius:1.5px"></div><div class="t" style="top:410.88px;font-size:6.4px;color:#c0c040;letter-spacing:-0.2px;left:41.50px;">DC50</div><div class="t" style="top:419.74px;font-size:7.4px;color:#f0f0f0;letter-spacing:0px;-webkit-text-stroke:0.15px #f0f0f0;left:-140.80px;width:200px;text-align:right;">50.0 mV/div</div><div class="t" style="top:427.74px;font-size:7.4px;color:#f0f0f0;letter-spacing:0px;-webkit-text-stroke:0.15px #f0f0f0;left:-140.80px;width:200px;text-align:right;">0.0 mV ofst</div><div class="abs" style="left:62px;top:409px;width:57.5px;height:35.5px;background:#404040"></div><div class="abs" style="left:62px;top:409px;width:57.5px;height:9px;background:#ffc000"></div><div class="t" style="top:409.87px;font-size:7.6px;color:#3a2600;letter-spacing:0px;-webkit-text-stroke:0.3px #3a2600;left:64.30px;">C2</div><div class="t" style="top:410.04px;font-size:7.4px;color:#3a2600;letter-spacing:0px;-webkit-text-stroke:0.3px #3a2600;left:-80.80px;width:200px;text-align:right;">track(P1)</div><div class="t" style="top:419.74px;font-size:7.4px;color:#f0f0f0;letter-spacing:0px;-webkit-text-stroke:0.15px #f0f0f0;left:-81.30px;width:200px;text-align:right;">2.45 MHz</div><div class="t" style="top:427.74px;font-size:7.4px;color:#f0f0f0;letter-spacing:0px;-webkit-text-stroke:0.15px #f0f0f0;left:-81.30px;width:200px;text-align:right;">100 ns/div</div><div class="abs" style="left:121px;top:409px;width:57.5px;height:35.5px;background:#404040"></div><div class="abs" style="left:121px;top:409px;width:57.5px;height:9px;background:#ff6090"></div><div class="t" style="top:409.87px;font-size:7.6px;color:#5a0020;letter-spacing:0px;-webkit-text-stroke:0.3px #5a0020;left:123.30px;">F2</div><div class="t" style="top:410.04px;font-size:7.4px;color:#5a0020;letter-spacing:0px;-webkit-text-stroke:0.3px #5a0020;left:-21.80px;width:200px;text-align:right;">hist(P1)</div><div class="t" style="top:419.74px;font-size:7.4px;color:#f0f0f0;letter-spacing:0px;-webkit-text-stroke:0.15px #f0f0f0;left:-22.30px;width:200px;text-align:right;">200 #/div</div><div class="t" style="top:427.74px;font-size:7.4px;color:#f0f0f0;letter-spacing:0px;-webkit-text-stroke:0.15px #f0f0f0;left:-22.30px;width:200px;text-align:right;">2.00 MHz</div><div class="t" style="top:435.74px;font-size:7.4px;color:#f0f0f0;letter-spacing:0px;-webkit-text-stroke:0.15px #f0f0f0;left:-22.30px;width:200px;text-align:right;">49.986 k#</div><div class="abs" style="left:180px;top:409px;width:59px;height:35.5px;background:#2e5070;border:1px solid #3a74aa;border-radius:1.5px"></div><div class="abs" style="left:180px;top:409px;width:59px;height:9px;background:#ffff00"></div><div class="t" style="top:409.87px;font-size:7.6px;color:#1a1a00;letter-spacing:0px;-webkit-text-stroke:0.3px #1a1a00;left:182.30px;">Z1</div><div class="t" style="top:410.04px;font-size:7.4px;color:#1a1a00;letter-spacing:0px;-webkit-text-stroke:0.3px #1a1a00;left:38.20px;width:200px;text-align:right;">zoom(C1)</div><div class="t" style="top:419.74px;font-size:7.4px;color:#f0f0f0;letter-spacing:0px;-webkit-text-stroke:0.15px #f0f0f0;left:38.20px;width:200px;text-align:right;">50.0 mV/div</div><div class="t" style="top:427.74px;font-size:7.4px;color:#f0f0f0;letter-spacing:0px;-webkit-text-stroke:0.15px #f0f0f0;left:38.20px;width:200px;text-align:right;">1.00 ns/div</div>
<div class="abs" style="left:631.5px;top:409px;width:65.5px;height:27.3px;background:#3e3e3e"></div>
<div class="abs" style="left:631.5px;top:409px;width:65.5px;height:8.4px;background:#f2f2f2"></div>
<div class="abs" style="left:699.6px;top:409px;width:57.2px;height:27.3px;background:#3e3e3e"></div>
<div class="abs" style="left:699.6px;top:409px;width:57.2px;height:8.4px;background:#f2f2f2"></div>
<div class="abs" style="left:731.6px;top:409.7px;width:11px;height:6.8px;background:#0a0a0a;border-radius:1.5px"></div>
<div class="abs" style="left:743.6px;top:409.7px;width:12px;height:6.8px;background:#0a0a0a;border-radius:1.5px"></div>
<div class="t" style="top:409.95px;font-size:7.5px;color:#111;letter-spacing:-0.1px;left:632.50px;">Timebase</div><div class="t" style="top:409.95px;font-size:7.5px;color:#111;letter-spacing:-0.1px;left:496.50px;width:200px;text-align:right;">0 ns</div><div class="t" style="top:418.94px;font-size:7.4px;color:#eee;letter-spacing:-0.15px;left:496.50px;width:200px;text-align:right;">100 ns/div</div><div class="t" style="top:427.34px;font-size:7.4px;color:#eee;letter-spacing:-0.15px;left:632.50px;">40.0 kS</div><div class="t" style="top:427.34px;font-size:7.4px;color:#eee;letter-spacing:-0.15px;left:496.50px;width:200px;text-align:right;">40 GS/s</div><div class="t" style="top:409.95px;font-size:7.5px;color:#111;letter-spacing:-0.1px;left:700.50px;">Trigger</div><div class="t" style="top:418.94px;font-size:7.4px;color:#eee;letter-spacing:-0.15px;left:700.50px;">Stop</div><div class="t" style="top:418.94px;font-size:7.4px;color:#eee;letter-spacing:-0.15px;left:556.30px;width:200px;text-align:right;">0.0 mV</div><div class="t" style="top:427.34px;font-size:7.4px;color:#eee;letter-spacing:-0.15px;left:700.50px;">Edge</div><div class="t" style="top:427.34px;font-size:7.4px;color:#eee;letter-spacing:-0.15px;left:556.30px;width:200px;text-align:right;">Positive</div><div class="t" style="top:410.14px;font-size:6.8px;color:#fff;letter-spacing:-0.2px;left:733.20px;">C1</div><div class="t" style="top:410.14px;font-size:6.8px;color:#fff;letter-spacing:-0.2px;left:744.80px;">DC</div>
<div class="abs" style="left:0;top:445.5px;width:760px;height:11px;background:#282828"></div>
<div class="t" style="left:3.2px;top:447.3px;font-size:8.5px;color:#ececec;font-weight:bold;transform:scaleX(0.87);transform-origin:0 0">TELEDYNE</div>
<div class="t" style="left:45.5px;top:447.3px;font-size:8.5px;color:#f0f0f0;-webkit-text-stroke:0.1px #f0f0f0;transform:scaleX(0.78);transform-origin:0 0">LECROY</div>
<div class="t" style="left:600px;top:447.5px;width:151px;text-align:right;font-size:7.6px;color:#e8e8e8;letter-spacing:-0.1px">3/17/2015 1:04:12 PM</div>
</body></html>
